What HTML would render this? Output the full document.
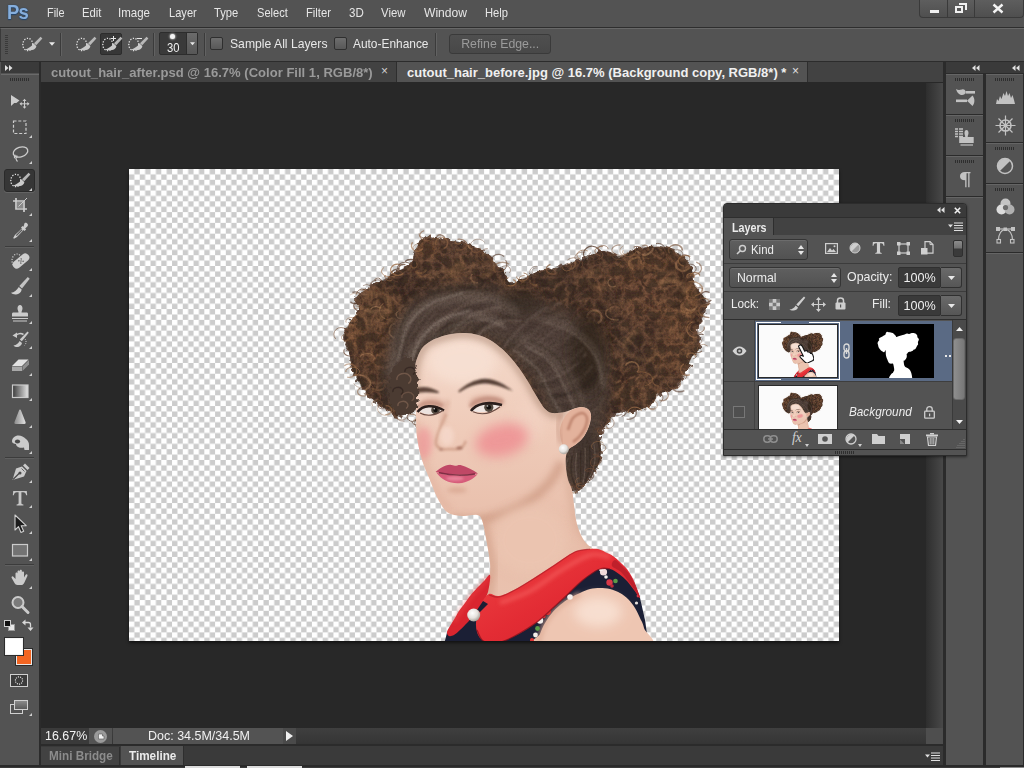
<!DOCTYPE html>
<html>
<head>
<meta charset="utf-8">
<title>Photoshop</title>
<style>
*{box-sizing:border-box;margin:0;padding:0}
html,body{width:1024px;height:768px;overflow:hidden;background:#535353;font-family:"Liberation Sans",sans-serif;color:#e0e0e0}
.abs{position:absolute}
#root{position:relative;width:1024px;height:768px;overflow:hidden;background:#535353}
/* menu bar */
#menubar{left:0;top:0;width:1024px;height:28px;background:#535353;border-bottom:1px solid #2e2e2e}
#menubar span.m{position:absolute;top:5px;font-size:13px;color:#e6e6e6;letter-spacing:0}
#pslogo{left:7px;top:0px;font-size:21px;font-weight:bold;color:#86aedc;letter-spacing:-1px;transform:scaleX(.88);transform-origin:0 0;text-shadow:0 0 1.500px #1d3a5e,0 1px 1px #24466e}
/* options bar */
#optbar{left:0;top:28px;width:1024px;height:33px;background:#535353;border-top:1px solid #686868;border-left:1px solid #3a3a3a}
#optline{left:0;top:61px;width:1024px;height:1px;background:#2c2c2c}
/* doc area */
#docarea{left:41px;top:62px;width:905px;height:685px;background:#282828}
#tabbar{left:41px;top:62px;width:902px;height:20px;background:#424242}
/* toolbar */
#toolhead{left:1px;top:62px;width:38px;height:11px;background:#3a3a3a}
#toolbar{left:1px;top:74px;width:38px;height:694px;background:#535353;border-top:1px solid #6a6a6a}
#toolsep{left:39px;top:62px;width:2px;height:706px;background:#2b2b2b}

/* options bar widgets */
.vsep{position:absolute;width:1px;background:#3b3b3b;box-shadow:1px 0 0 #626262}
.chk{position:absolute;width:13px;height:13px;border:1px solid #2f2f2f;border-radius:2px;background:linear-gradient(#6e6e6e,#585858)}
.otext{position:absolute;font-size:13px;color:#e8e8e8;white-space:nowrap}
#brushpick{left:159px;top:32px;width:39px;height:23px;border:1px solid #2d2d2d;border-radius:2px;background:#3a3a3a}
#brushpick .arr{position:absolute;right:0;top:0;width:11px;height:21px;background:linear-gradient(#6b6b6b,#575757);border-left:1px solid #2d2d2d}
#refine{left:449px;top:34px;width:102px;height:20px;border:1px solid #3a3a3a;border-radius:3px;background:linear-gradient(#4f4f4f,#484848);color:#9b9b9b;font-size:13px;text-align:center;line-height:18px}
.tab{position:absolute;top:0;height:20px;font-size:13px;font-weight:bold;white-space:nowrap;line-height:21px}
/* window controls */
#winctl{left:919px;top:0;width:105px;height:18px;border:1px solid #3a3a3a;border-top:none;border-radius:0 0 4px 4px;background:linear-gradient(#5e5e5e,#4f4f4f)}
/* status */
#status{left:41px;top:728px;width:885px;height:16px;background:linear-gradient(#3f3f3f,#353535)}
#bottomtabs{left:41px;top:746px;width:902px;height:19px;background:#3a3a3a}

.dk{position:absolute;background:#535353;border-top:1px solid #656565}
.grip{position:absolute;height:3px;width:20px;background:repeating-linear-gradient(90deg,#2e2e2e 0 1px,#535353 1px 2px)}

#layers{z-index:20;left:723px;top:203px;width:244px;height:253px;background:#535353;border:1px solid #2c2c2c;border-radius:4px 4px 0 0;overflow:hidden;box-shadow:0 1px 3px rgba(0,0,0,.5)}
#layers .lt{position:absolute;font-size:13px;color:#ececec;white-space:nowrap}
.dd{position:absolute;height:21px;border:1px solid #353535;border-radius:3px;background:linear-gradient(#5f5f5f,#525252);box-shadow:inset 0 1px 0 #6c6c6c;font-size:13px;color:#ececec;line-height:19px}
.fld{position:absolute;height:21px;border:1px solid #303030;border-radius:2px;background:#3a3a3a;font-size:13px;color:#f0f0f0;line-height:19px;text-align:center}
.fldb{position:absolute;height:21px;width:21px;border:1px solid #303030;border-left:none;border-radius:0 3px 3px 0;background:linear-gradient(#6a6a6a,#565656)}

#canvas{left:129px;top:169px;width:710px;height:472px;overflow:hidden;box-shadow:0 2px 3px rgba(0,0,0,.55);background:#fff}
.fx{display:inline-block;transform-origin:0 50%;white-space:nowrap}
</style>
</head>
<body>
<div id="root">
<svg width="0" height="0" style="position:absolute"><defs>
<g id="qsel"><ellipse cx="7.800" cy="10.500" rx="5" ry="6.200" fill="none" stroke="#e2e2e2" stroke-width="1.300" stroke-dasharray="1.300 1.450"/><path d="M20.600 2.800l1.800 1.600-6.200 6.800-2.200-1.900z" fill="#b8b8b8"/><path d="M13.600 9.600l2.700 2.300c0 3.600-5 5.200-11.300 3.800 3.800-1.300 6.800-3.400 8.600-6.100z" fill="#cacaca"/></g>
</defs></svg>

<!--MENUBAR-->
<div id="menubar" class="abs">
<div id="pslogo" class="abs">Ps</div>
<span class="m" style="left:47.0px"><span class="fx" style="transform:scaleX(0.835)">File</span></span>
<span class="m" style="left:82.0px"><span class="fx" style="transform:scaleX(0.870)">Edit</span></span>
<span class="m" style="left:118.2px"><span class="fx" style="transform:scaleX(0.885)">Image</span></span>
<span class="m" style="left:168.8px"><span class="fx" style="transform:scaleX(0.853)">Layer</span></span>
<span class="m" style="left:214.0px"><span class="fx" style="transform:scaleX(0.860)">Type</span></span>
<span class="m" style="left:256.8px"><span class="fx" style="transform:scaleX(0.851)">Select</span></span>
<span class="m" style="left:306.2px"><span class="fx" style="transform:scaleX(0.865)">Filter</span></span>
<span class="m" style="left:348.8px"><span class="fx" style="transform:scaleX(0.887)">3D</span></span>
<span class="m" style="left:380.5px"><span class="fx" style="transform:scaleX(0.876)">View</span></span>
<span class="m" style="left:423.8px"><span class="fx" style="transform:scaleX(0.930)">Window</span></span>
<span class="m" style="left:485.0px"><span class="fx" style="transform:scaleX(0.860)">Help</span></span>
</div>
<!--OPTBAR-->
<div id="optbar" class="abs"></div>
<div id="optline" class="abs"></div>
<!-- grip -->
<div class="abs" style="left:5px;top:35px;width:3px;height:20px;background:repeating-linear-gradient(#3a3a3a 0 1px,#535353 1px 2px)"></div>
<svg class="abs" style="left:20px;top:34px" width="24" height="20" viewBox="0 0 24 20"><use href="#qsel"/></svg>
<svg class="abs" style="left:49px;top:42px" width="6" height="4" viewBox="0 0 7 4"><path d="M0 0h7L3.5 4z" fill="#e8e8e8"/></svg>
<div class="vsep" style="left:60px;top:33px;height:23px"></div>
<svg class="abs" style="left:74px;top:34px" width="24" height="20" viewBox="0 0 24 20"><use href="#qsel"/></svg>
<div class="abs" style="left:100px;top:33px;width:22px;height:22px;background:#373737;border:1px solid #2c2c2c;border-radius:2px"></div>
<svg class="abs" style="left:100px;top:34px" width="24" height="20" viewBox="0 0 24 20"><use href="#qsel"/><path d="M13.5 2v5M11 4.500h5" stroke="#e8e8e8" stroke-width="1" fill="none"/></svg>
<svg class="abs" style="left:126px;top:34px" width="24" height="20" viewBox="0 0 24 20"><use href="#qsel"/><path d="M11 4.500h5" stroke="#e8e8e8" stroke-width="1" fill="none"/></svg>
<div class="vsep" style="left:153px;top:33px;height:23px"></div>
<div id="brushpick" class="abs"><div class="arr"></div>
<div class="abs" style="left:10px;top:1px;width:5px;height:5px;border-radius:50%;background:#f4f4f4;box-shadow:0 0 2px 0.500px rgba(255,255,255,.7)"></div>
<div class="abs" style="left:0;top:7px;width:26px;text-align:center;font-size:13px;color:#f0f0f0"><span class="fx" style="transform-origin:50% 50%;transform:scaleX(0.864)">30</span></div>
<svg class="abs" style="left:30px;top:9px" width="5" height="3.500" viewBox="0 0 7 4"><path d="M0 0h7L3.5 4z" fill="#e8e8e8"/></svg>
</div>
<div class="vsep" style="left:204px;top:33px;height:23px"></div>
<div class="chk" style="left:210px;top:37px"></div>
<div class="otext" style="left:230px;top:36px"><span class="fx" style="transform:scaleX(0.937)">Sample All Layers</span></div>
<div class="chk" style="left:334px;top:37px"></div>
<div class="otext" style="left:353px;top:36px"><span class="fx" style="transform:scaleX(0.916)">Auto-Enhance</span></div>
<div class="vsep" style="left:435px;top:33px;height:23px"></div>
<div id="refine" class="abs"><span class="fx" style="transform-origin:50% 50%;transform:scaleX(0.947)">Refine Edge...</span></div>
<div id="winctl" class="abs">
<div class="abs" style="left:27px;top:0;width:1px;height:17px;background:#3a3a3a"></div>
<div class="abs" style="left:54px;top:0;width:1px;height:17px;background:#3a3a3a"></div>
<div class="abs" style="left:10px;top:10px;width:9px;height:3px;background:#f0f0f0"></div>
<div class="abs" style="left:35px;top:6px;width:8px;height:7px;border:2px solid #f0f0f0"></div>
<div class="abs" style="left:39px;top:3px;width:8px;height:7px;border:2px solid #f0f0f0;border-left-width:0;border-bottom-width:0"></div>
<svg class="abs" style="left:72px;top:3px" width="12" height="11" viewBox="0 0 12 11"><path d="M1.500 1.500L10.500 9.500M10.500 1.500L1.500 9.500" stroke="#f4f4f4" stroke-width="2.400"/></svg>
</div>
<!--DOCAREA-->
<div id="docarea" class="abs"></div>
<div id="tabbar" class="abs">
<div class="tab" style="left:0;width:355px;background:#424242;color:#9a9a9a;padding-left:10px"><span class="fx" style="transform:scaleX(1.004)">cutout_hair_after.psd @ 16.7% (Color Fill 1, RGB/8*)</span><span style="position:absolute;left:340px;top:-1px;font-size:12px;color:#cfcfcf;font-weight:normal">×</span></div>
<div class="tab" style="left:355px;width:412px;background:#535353;color:#f0f0f0;padding-left:10px;border-left:1px solid #2e2e2e;border-right:1px solid #2e2e2e"><span class="fx" style="transform:scaleX(1.000)">cutout_hair_before.jpg @ 16.7% (Background copy, RGB/8*) *</span><span style="position:absolute;left:395px;top:-1px;font-size:12px;color:#e0e0e0;font-weight:normal">×</span></div>
</div>
<!--TOOLBAR-->
<div id="toolhead" class="abs"></div>
<svg class="abs" style="left:5px;top:65px" width="8" height="6" viewBox="0 0 8 6"><path d="M0 0l3.500 3-3.500 3zM4 0l3.500 3-3.500 3z" fill="#e0e0e0"/></svg>
<div id="toolbar" class="abs"></div>
<div class="abs" style="left:10px;top:78px;width:20px;height:3px;background:repeating-linear-gradient(90deg,#2f2f2f 0 1px,#535353 1px 2px)"></div>
<div class="abs" style="left:4px;top:169px;width:31px;height:23px;background:#363636;border:1px solid #2a2a2a;border-radius:3px;box-shadow:0 1px 0 #646464"></div>
<svg class="abs" style="left:7.500px;top:89px" width="24" height="24" viewBox="0 0 24 24"><path d="M3 6v11l3.200-3 2.200 .1 3.100-2.500z" fill="#cdcdcd"/><path d="M16.500 11v7.500M12.700 14.800h7.600" stroke="#cdcdcd" stroke-width="1" fill="none"/><path d="M16.500 9.800l-1.900 2.200h3.800zM16.500 19.800l-1.900-2.200h3.800zM11.500 14.800l2.200-1.900v3.800zM21.500 14.800l-2.200-1.900v3.800z" fill="#cdcdcd"/></svg>
<svg class="abs" style="left:7.500px;top:115px" width="24" height="24" viewBox="0 0 24 24"><rect x="5.500" y="6" width="12.500" height="12.500" fill="none" stroke="#cdcdcd" stroke-width="1.200" stroke-dasharray="3 1.800"/></svg>
<svg class="abs" style="left:7.500px;top:141.5px" width="24" height="24" viewBox="0 0 24 24"><ellipse cx="12.500" cy="10" rx="7.500" ry="4.800" transform="rotate(-18 12.500 10)" fill="none" stroke="#cdcdcd" stroke-width="1.300"/><path d="M7.500 13c-1.500 1-1.500 3 0 3s2-1.500 1-2.500M8 16c0 1.500 .5 2.500 1.500 3.500" fill="none" stroke="#cbcbcb" stroke-width="1.200"/></svg>
<svg class="abs" style="left:7.500px;top:193px" width="24" height="24" viewBox="0 0 24 24"><path d="M8 5v11h11M5 8h11v11" fill="none" stroke="#cdcdcd" stroke-width="1.700"/><rect x="9" y="9" width="6" height="6" fill="#8a8a8a"/><path d="M19 5l-8.500 8.500" stroke="#cdcdcd" stroke-width="1" fill="none"/></svg>
<svg class="abs" style="left:7.500px;top:219px" width="24" height="24" viewBox="0 0 24 24"><path d="M16.500 4.200c1.600-1.600 4.600 1.300 3 3l-2.300 2.300 .9 .9-1.600 1.600-.9-.9-6.600 7-3 1.700-.8-.8 1.700-3 7-6.600-.9-.9 1.600-1.600 .9 .9z" fill="#cdcdcd"/><path d="M8.300 16.600l5.800-5.800" stroke="#5a5a5a" stroke-width="1.300"/></svg>
<svg class="abs" style="left:7.500px;top:248.5px" width="24" height="24" viewBox="0 0 24 24"><ellipse cx="9" cy="11.500" rx="5" ry="6.500" fill="none" stroke="#cbcbcb" stroke-width="1.200" stroke-dasharray="1.200 1.400"/><g transform="rotate(-40 13 12)"><rect x="3.500" y="8" width="19" height="8" rx="3.800" fill="#cdcdcd"/><circle cx="11.500" cy="10.500" r=".7" fill="#555"/><circle cx="14.500" cy="10.500" r=".7" fill="#555"/><circle cx="11.500" cy="13.500" r=".7" fill="#555"/><circle cx="14.500" cy="13.500" r=".7" fill="#555"/><circle cx="13" cy="12" r=".7" fill="#555"/></g></svg>
<svg class="abs" style="left:7.500px;top:274px" width="24" height="24" viewBox="0 0 24 24"><path d="M19.800 3l1.900 1.700-7.700 9.800-2.700-2.400z" fill="#c4c4c4"/><path d="M3 18.800c3.300-.4 5.600-2.400 7.800-5.800l2.900 2.500c-.4 3.200-2.800 4.700-5.600 4.900-2.200 .1-4-.4-5.100-1.600z" fill="#d0d0d0"/></svg>
<svg class="abs" style="left:7.500px;top:301px" width="24" height="24" viewBox="0 0 24 24"><path d="M9.500 7.500c0-2 1-3.500 2.500-3.500s2.500 1.500 2.500 3.500c0 1.500-1 2.500-1 4h5c1 0 1.500 .5 1.500 1.500v2.500h-16v-2.500c0-1 .5-1.500 1.500-1.500h5c0-1.500-1-2.500-1-4z" fill="#cbcbcb"/><path d="M4 17.500h16M5 20h14" stroke="#cbcbcb" stroke-width="1.200"/></svg>
<svg class="abs" style="left:7.500px;top:326.5px" width="24" height="24" viewBox="0 0 24 24"><path d="M19.500 4.500l1.300 1.200-7 8.500-2-1.800z" fill="#cbcbcb"/><path d="M5.500 18.500c3-.2 4.500-2 6.200-4.500l2.300 2.100c-.5 2.500-2.500 3.800-4.500 4-1.700 .1-3-.5-4-1.600z" fill="#cbcbcb"/><path d="M7.500 8.500c2-2 5.500-2.500 8-1" fill="none" stroke="#cbcbcb" stroke-width="1.600"/><path d="M4.500 8.500l4.500-3v5.500z" fill="#cbcbcb"/><path d="M17 12c1.500 1.500 1.500 4.500-.5 6.500" fill="none" stroke="#cbcbcb" stroke-width="1" stroke-dasharray="1 1.200"/></svg>
<svg class="abs" style="left:7.500px;top:353px" width="24" height="24" viewBox="0 0 24 24"><path d="M10.500 6.500h10l-6.500 6.500h-10z" fill="#e2e2e2"/><path d="M4 13.500h10v4.500h-10z" fill="#a8a8a8"/><path d="M14.500 13.500l6.500-6.500v4.500l-6.500 6.500z" fill="#8e8e8e"/></svg>
<svg class="abs" style="left:7.500px;top:378.5px" width="24" height="24" viewBox="0 0 24 24"><defs><linearGradient id="gg" x1="0" x2="1"><stop offset="0" stop-color="#3a3a3a"/><stop offset="1" stop-color="#e4e4e4"/></linearGradient></defs><rect x="4.500" y="6" width="15.500" height="12.500" fill="url(#gg)" stroke="#cbcbcb" stroke-width="1.200"/></svg>
<svg class="abs" style="left:7.500px;top:405px" width="24" height="24" viewBox="0 0 24 24"><defs><linearGradient id="bg2" x1="0" x2="1"><stop offset="0" stop-color="#8c8c8c"/><stop offset="1" stop-color="#e2e2e2"/></linearGradient></defs><path d="M12 4.500c.5 0 .8 .3 1 1l4.500 11.500c.4 1.200 0 2-1.200 2h-8.600c-1.200 0-1.600-.8-1.200-2l4.500-11.500c.2-.7 .5-1 1-1z" fill="url(#bg2)"/></svg>
<svg class="abs" style="left:7.500px;top:431px" width="24" height="24" viewBox="0 0 24 24"><path d="M4 10.500c0-3.500 3-6 6.500-6 3 0 5 1.500 7.500 3.500 2 1.500 3 3.500 3 6v5h-4.500l-.5-2.500c-2 .5-4 .5-6-.5-1.500-.8-2-2-2-3-2-.2-4-.8-4-2.500z" fill="#cbcbcb"/><ellipse cx="9.500" cy="10.500" rx="2.600" ry="1.900" fill="#4a4a4a"/></svg>
<svg class="abs" style="left:7.500px;top:460px" width="24" height="24" viewBox="0 0 24 24"><path d="M17 3.500l4.500 4.500-2 2-4.500-4.500z" fill="#cbcbcb"/><path d="M14 6.500l4.500 4.500-2.500 5.500-11.500 3.500 3.500-11.500z" fill="#cbcbcb"/><path d="M5 19.500l6.500-6.500" stroke="#4a4a4a" stroke-width="1.200"/><circle cx="12" cy="13" r="1.500" fill="#4a4a4a"/><path d="M13.500 8.500l3 3" stroke="#4a4a4a" stroke-width=".8"/></svg>
<svg class="abs" style="left:7.500px;top:485.5px" width="24" height="24" viewBox="0 0 24 24"><path d="M5.200 5h13.600l.4 4.300h-1c-.4-2.200-1.300-3.100-3-3.100h-1.800v10.600c0 1.300 .4 1.600 2 1.700v.9h-6.800v-.9c1.600-.1 2-.4 2-1.700v-10.600h-1.800c-1.700 0-2.600 .9-3 3.100h-1z" fill="#c6c6c6"/></svg>
<svg class="abs" style="left:7.500px;top:511.5px" width="24" height="24" viewBox="0 0 24 24"><path d="M7 3v15l3.500-3.300 2.500 5.800 2.700-1.200-2.500-5.600h5z" fill="#1c1c1c" stroke="#cfcfcf" stroke-width="1.100" stroke-linejoin="round"/></svg>
<svg class="abs" style="left:7.500px;top:538px" width="24" height="24" viewBox="0 0 24 24"><rect x="4.500" y="6.500" width="15" height="11.500" fill="#737373" stroke="#cbcbcb" stroke-width="1.200"/></svg>
<svg class="abs" style="left:7.500px;top:566.5px" width="24" height="24" viewBox="0 0 24 24"><path d="M7.500 12v-5.500c0-1.500 2-1.500 2 0v-2c0-1.500 2.200-1.500 2.200 0v-.7c0-1.500 2.200-1.500 2.200 0v1.700c0-1.400 2.100-1.400 2.100 0v5l1.500-2.500c.8-1.300 2.500-.4 1.900 .9l-3 6.500c-.7 1.500-1.500 2.600-3.400 2.600h-3.500c-1.500 0-2.300-.7-3-2l-2.800-5c-.7-1.300 1-2.300 1.900-1.100z" fill="#cbcbcb"/></svg>
<svg class="abs" style="left:7.500px;top:592.5px" width="24" height="24" viewBox="0 0 24 24"><circle cx="10" cy="9.500" r="5.500" fill="#7b7b7b" stroke="#cbcbcb" stroke-width="2"/><path d="M14 13.500l6 6" stroke="#cbcbcb" stroke-width="3" stroke-linecap="round"/></svg>
<svg class="abs" style="left:8px;top:170px" width="24" height="20" viewBox="0 0 24 20"><use href="#qsel"/></svg>
<svg class="abs" style="left:29px;top:134.5px" width="3" height="3" viewBox="0 0 3 3"><path d="M3 0v3h-3z" fill="#d0d0d0"/></svg>
<svg class="abs" style="left:29px;top:161.0px" width="3" height="3" viewBox="0 0 3 3"><path d="M3 0v3h-3z" fill="#d0d0d0"/></svg>
<svg class="abs" style="left:29px;top:212.5px" width="3" height="3" viewBox="0 0 3 3"><path d="M3 0v3h-3z" fill="#d0d0d0"/></svg>
<svg class="abs" style="left:29px;top:238.5px" width="3" height="3" viewBox="0 0 3 3"><path d="M3 0v3h-3z" fill="#d0d0d0"/></svg>
<svg class="abs" style="left:29px;top:268.0px" width="3" height="3" viewBox="0 0 3 3"><path d="M3 0v3h-3z" fill="#d0d0d0"/></svg>
<svg class="abs" style="left:29px;top:293.5px" width="3" height="3" viewBox="0 0 3 3"><path d="M3 0v3h-3z" fill="#d0d0d0"/></svg>
<svg class="abs" style="left:29px;top:320.5px" width="3" height="3" viewBox="0 0 3 3"><path d="M3 0v3h-3z" fill="#d0d0d0"/></svg>
<svg class="abs" style="left:29px;top:346.0px" width="3" height="3" viewBox="0 0 3 3"><path d="M3 0v3h-3z" fill="#d0d0d0"/></svg>
<svg class="abs" style="left:29px;top:372.5px" width="3" height="3" viewBox="0 0 3 3"><path d="M3 0v3h-3z" fill="#d0d0d0"/></svg>
<svg class="abs" style="left:29px;top:398.0px" width="3" height="3" viewBox="0 0 3 3"><path d="M3 0v3h-3z" fill="#d0d0d0"/></svg>
<svg class="abs" style="left:29px;top:424.5px" width="3" height="3" viewBox="0 0 3 3"><path d="M3 0v3h-3z" fill="#d0d0d0"/></svg>
<svg class="abs" style="left:29px;top:450.5px" width="3" height="3" viewBox="0 0 3 3"><path d="M3 0v3h-3z" fill="#d0d0d0"/></svg>
<svg class="abs" style="left:29px;top:479.5px" width="3" height="3" viewBox="0 0 3 3"><path d="M3 0v3h-3z" fill="#d0d0d0"/></svg>
<svg class="abs" style="left:29px;top:505.0px" width="3" height="3" viewBox="0 0 3 3"><path d="M3 0v3h-3z" fill="#d0d0d0"/></svg>
<svg class="abs" style="left:29px;top:531.0px" width="3" height="3" viewBox="0 0 3 3"><path d="M3 0v3h-3z" fill="#d0d0d0"/></svg>
<svg class="abs" style="left:29px;top:557.5px" width="3" height="3" viewBox="0 0 3 3"><path d="M3 0v3h-3z" fill="#d0d0d0"/></svg>
<svg class="abs" style="left:29px;top:586.0px" width="3" height="3" viewBox="0 0 3 3"><path d="M3 0v3h-3z" fill="#d0d0d0"/></svg>
<svg class="abs" style="left:29px;top:187.500px" width="3" height="3" viewBox="0 0 3 3"><path d="M3 0v3h-3z" fill="#d0d0d0"/></svg>
<div class="abs" style="left:5px;top:246px;width:29px;height:1px;background:#3c3c3c;box-shadow:0 1px 0 #606060"></div>
<div class="abs" style="left:5px;top:457px;width:29px;height:1px;background:#3c3c3c;box-shadow:0 1px 0 #606060"></div>
<div class="abs" style="left:5px;top:564px;width:29px;height:1px;background:#3c3c3c;box-shadow:0 1px 0 #606060"></div>
<div class="abs" style="left:8px;top:624px;width:7px;height:7px;background:#e8e8e8;border:1px solid #999"></div>
<div class="abs" style="left:4px;top:620px;width:7px;height:7px;background:#111;border:1px solid #cfcfcf"></div>
<svg class="abs" style="left:22px;top:619px" width="12" height="12" viewBox="0 0 12 12"><path d="M2.500 3.500h4c1.500 0 2 .5 2 2v3" fill="none" stroke="#d8d8d8" stroke-width="1.300"/><path d="M0 3.500l3.500-3v6zM8.500 12l-3-3.500h6z" fill="#d8d8d8"/></svg>
<div class="abs" style="left:16px;top:649px;width:16px;height:16px;background:#f26522;border:1px solid #e8e8e8;box-shadow:0 0 0 1px #2c2c2c"></div>
<div class="abs" style="left:5px;top:638px;width:18px;height:17px;background:#fff;border:1px solid #f4f4f4;box-shadow:0 0 0 1px #2c2c2c"></div>
<div class="abs" style="left:10px;top:674px;width:18px;height:13px;background:#3c3c3c;border:1px solid #d0d0d0"></div>
<svg class="abs" style="left:10px;top:674px" width="18" height="13" viewBox="0 0 18 13"><circle cx="9" cy="6.500" r="3.600" fill="none" stroke="#f0f0f0" stroke-width="1.100" stroke-dasharray="1.100 1.100"/></svg>
<div class="abs" style="left:10px;top:704px;width:13px;height:10px;background:#535353;border:1px solid #d0d0d0"></div>
<div class="abs" style="left:14px;top:700px;width:14px;height:10px;background:linear-gradient(#8a8a8a,#5a5a5a);border:1px solid #d0d0d0"></div>
<svg class="abs" style="left:29px;top:713px" width="3" height="3" viewBox="0 0 3 3"><path d="M3 0v3h-3z" fill="#d0d0d0"/></svg>
<div id="toolsep" class="abs"></div>
<!--CANVAS-->
<div id="canvas" class="abs">
<svg class="abs" style="left:0;top:0" width="710" height="472" viewBox="0 0 710 472"><defs><pattern id="chk" width="10.760" height="10.776" patternUnits="userSpaceOnUse"><rect width="10.760" height="10.776" fill="#fff"/><rect x="5.380" y="0" width="5.380" height="5.388" fill="#cccccc"/><rect x="0" y="5.388" width="5.380" height="5.388" fill="#cccccc"/></pattern></defs><rect width="710" height="472" fill="url(#chk)"/></svg>
<!--PORTRAIT_START-->
<svg class="abs" style="left:0;top:0" width="710" height="472" viewBox="129 169 710 472">
<defs>
<filter id="frizz" x="-10%" y="-10%" width="120%" height="120%"><feTurbulence type="fractalNoise" baseFrequency="0.11" numOctaves="2" seed="4" result="n"/><feDisplacementMap in="SourceGraphic" in2="n" scale="12" xChannelSelector="R" yChannelSelector="G"/></filter>
<filter id="frizz2" x="-10%" y="-10%" width="120%" height="120%"><feTurbulence type="fractalNoise" baseFrequency="0.22" numOctaves="2" seed="9" result="n"/><feDisplacementMap in="SourceGraphic" in2="n" scale="9" xChannelSelector="R" yChannelSelector="G"/></filter>
<filter id="b1" x="-60%" y="-60%" width="220%" height="220%"><feGaussianBlur stdDeviation="1"/></filter>
<filter id="b07" x="-60%" y="-60%" width="220%" height="220%"><feGaussianBlur stdDeviation=".7"/></filter>
<filter id="b15" x="-60%" y="-60%" width="220%" height="220%"><feGaussianBlur stdDeviation="1.500"/></filter>
<filter id="b2" x="-60%" y="-60%" width="220%" height="220%"><feGaussianBlur stdDeviation="2"/></filter>
<filter id="b3" x="-60%" y="-60%" width="220%" height="220%"><feGaussianBlur stdDeviation="3.500"/></filter>
<filter id="b6" x="-60%" y="-60%" width="220%" height="220%"><feGaussianBlur stdDeviation="6"/></filter>
<filter id="b10" x="-60%" y="-60%" width="220%" height="220%"><feGaussianBlur stdDeviation="10"/></filter>
<filter id="curlL" x="0" y="0" width="100%" height="100%"><feTurbulence type="turbulence" baseFrequency="0.075" numOctaves="3" seed="5" result="n"/><feColorMatrix in="n" type="matrix" values="0 0 0 0 0  0 0 0 0 0  0 0 0 0 0  3.200 0 0 0 -.42" result="a"/><feComposite in="SourceGraphic" in2="a" operator="in"/></filter>
<filter id="curlD" x="0" y="0" width="100%" height="100%"><feTurbulence type="turbulence" baseFrequency="0.09" numOctaves="3" seed="11" result="n"/><feColorMatrix in="n" type="matrix" values="0 0 0 0 0  0 0 0 0 0  0 0 0 0 0  0 3.400 0 0 -.40" result="a"/><feComposite in="SourceGraphic" in2="a" operator="in"/></filter>
<filter id="fine" x="0" y="0" width="100%" height="100%"><feTurbulence type="fractalNoise" baseFrequency="0.45" numOctaves="2" seed="3" result="n"/><feColorMatrix in="n" type="matrix" values="0 0 0 0 0  0 0 0 0 0  0 0 0 0 0  2.500 0 0 0 -.95" result="a"/><feComposite in="SourceGraphic" in2="a" operator="in"/></filter>
<clipPath id="hairclip"><path d="M402.0 416.0C396.7 418.5 393.0 413.0 388.0 410.0C383.0 407.0 376.7 402.3 372.0 398.0C367.3 393.7 363.3 389.0 360.0 384.0C356.7 379.0 353.8 373.3 352.0 368.0C350.2 362.7 350.3 357.2 349.0 352.0C347.7 346.8 343.8 342.0 344.0 337.0C344.2 332.0 347.3 326.7 350.0 322.0C352.7 317.3 359.2 312.7 360.0 309.0C360.8 305.3 354.7 302.8 355.0 300.0C355.3 297.2 358.2 294.8 362.0 292.0C365.8 289.2 372.3 286.3 378.0 283.0C383.7 279.7 390.3 275.3 396.0 272.0C401.7 268.7 408.5 267.2 412.0 263.0C415.5 258.8 414.5 251.3 417.0 247.0C419.5 242.7 422.7 238.0 427.0 237.0C431.3 236.0 437.5 240.0 443.0 241.0C448.5 242.0 454.3 241.8 460.0 243.0C465.7 244.2 472.0 245.5 477.0 248.0C482.0 250.5 485.7 254.2 490.0 258.0C494.3 261.8 499.7 266.8 503.0 271.0C506.3 275.2 506.8 281.7 510.0 283.0C513.2 284.3 518.0 280.7 522.0 279.0C526.0 277.3 529.3 274.5 534.0 273.0C538.7 271.5 544.8 271.3 550.0 270.0C555.2 268.7 559.0 267.0 565.0 265.0C571.0 263.0 579.7 260.3 586.0 258.0C592.3 255.7 597.3 251.3 603.0 251.0C608.7 250.7 614.3 256.3 620.0 256.0C625.7 255.7 630.5 250.5 637.0 249.0C643.5 247.5 652.5 246.5 659.0 247.0C665.5 247.5 670.7 248.7 676.0 252.0C681.3 255.3 688.0 261.5 691.0 267.0C694.0 272.5 691.5 279.5 694.0 285.0C696.5 290.5 704.3 295.3 706.0 300.0C707.7 304.7 705.3 308.3 704.0 313.0C702.7 317.7 698.7 322.3 698.0 328.0C697.3 333.7 701.0 342.2 700.0 347.0C699.0 351.8 694.2 353.5 692.0 357.0C689.8 360.5 689.7 363.0 687.0 368.0C684.3 373.0 680.5 382.7 676.0 387.0C671.5 391.3 664.3 390.8 660.0 394.0C655.7 397.2 654.5 403.2 650.0 406.0C645.5 408.8 638.7 409.8 633.0 411.0C627.3 412.2 620.3 410.8 616.0 413.0C611.7 415.2 609.8 420.8 607.0 424.0C604.2 427.2 600.0 428.2 599.0 432.0C598.0 435.8 601.0 442.0 601.0 447.0C601.0 452.0 600.5 457.3 599.0 462.0C597.5 466.7 594.8 471.0 592.0 475.0C589.2 479.0 585.3 483.3 582.0 486.0C578.7 488.7 576.5 493.7 572.0 491.0C567.5 488.3 562.0 478.5 555.0 470.0C548.0 461.5 539.2 451.7 530.0 440.0C520.8 428.3 513.3 408.3 500.0 400.0C486.7 391.7 463.3 390.8 450.0 390.0C436.7 389.2 428.0 390.7 420.0 395.0C412.0 399.3 407.3 413.5 402.0 416.0Z"/></clipPath>
<clipPath id="skinclip"><path d="M415.0 368.0C415.5 362.0 416.7 359.5 418.0 356.0C419.3 352.5 420.8 349.5 423.0 347.0C425.2 344.5 428.2 342.7 431.0 341.0C433.8 339.3 436.5 338.2 440.0 337.0C443.5 335.8 447.8 334.7 452.0 334.0C456.2 333.3 460.7 332.8 465.0 333.0C469.3 333.2 473.8 333.8 478.0 335.0C482.2 336.2 486.2 337.8 490.0 340.0C493.8 342.2 497.7 345.2 501.0 348.0C504.3 350.8 507.0 353.7 510.0 357.0C513.0 360.3 516.2 364.2 519.0 368.0C521.8 371.8 524.5 376.0 527.0 380.0C529.5 384.0 531.8 388.3 534.0 392.0C536.2 395.7 538.2 399.2 540.0 402.0C541.8 404.8 543.0 407.2 545.0 409.0C547.0 410.8 548.7 412.5 552.0 413.0C555.3 413.5 561.5 412.7 565.0 412.0C568.5 411.3 570.3 409.8 573.0 409.0C575.7 408.2 578.5 407.0 581.0 407.0C583.5 407.0 586.3 407.7 588.0 409.0C589.7 410.3 590.7 412.7 591.0 415.0C591.3 417.3 590.7 420.3 590.0 423.0C589.3 425.7 588.3 428.3 587.0 431.0C585.7 433.7 584.0 436.7 582.0 439.0C580.0 441.3 577.2 443.3 575.0 445.0C572.8 446.7 570.5 447.2 569.0 449.0C567.5 450.8 566.5 452.8 566.0 456.0C565.5 459.2 565.7 464.0 566.0 468.0C566.3 472.0 567.0 476.3 568.0 480.0C569.0 483.7 571.0 485.8 572.0 490.0C573.0 494.2 573.3 500.0 574.0 505.0C574.7 510.0 575.0 515.3 576.0 520.0C577.0 524.7 578.3 529.2 580.0 533.0C581.7 536.8 583.3 540.0 586.0 543.0C588.7 546.0 592.7 548.8 596.0 551.0C599.3 553.2 604.3 545.8 606.0 556.0C607.7 566.2 626.7 602.7 606.0 612.0C585.3 621.3 502.5 614.7 482.0 612.0C461.5 609.3 481.8 601.7 483.0 596.0C484.2 590.3 487.8 583.5 489.0 578.0C490.2 572.5 490.5 569.7 490.0 563.0C489.5 556.3 487.3 545.2 486.0 538.0C484.7 530.8 483.5 523.8 482.0 520.0C480.5 516.2 480.3 515.7 477.0 515.0C473.7 514.3 467.0 516.5 462.0 516.0C457.0 515.5 451.2 515.2 447.0 512.0C442.8 508.8 439.8 502.3 437.0 497.0C434.2 491.7 432.5 486.2 430.0 480.0C427.5 473.8 424.2 467.2 422.0 460.0C419.8 452.8 418.0 444.2 417.0 437.0C416.0 429.8 416.3 424.5 416.0 417.0C415.7 409.5 415.2 400.2 415.0 392.0C414.8 383.8 414.5 374.0 415.0 368.0Z"/></clipPath>
<clipPath id="cvs"><rect x="129" y="169" width="710" height="472"/></clipPath>
<linearGradient id="collg" x1="0" y1="0" x2="1" y2="1"><stop offset="0" stop-color="#ee4444"/><stop offset=".5" stop-color="#e32c34"/><stop offset="1" stop-color="#cf222c"/></linearGradient>
<radialGradient id="pearl" cx=".4" cy=".35" r=".7"><stop offset="0" stop-color="#ffffff"/><stop offset=".55" stop-color="#e6e2de"/><stop offset="1" stop-color="#9c968e"/></radialGradient>
<linearGradient id="skg" x1="0" y1="0" x2="0" y2="1"><stop offset="0" stop-color="#f4dacb"/><stop offset=".35" stop-color="#efcbb9"/><stop offset=".7" stop-color="#e8beaa"/><stop offset="1" stop-color="#eac3b0"/></linearGradient>
</defs>
<g id="pg">
<g filter="url(#frizz)"><path d="M402.0 416.0C396.7 418.5 393.0 413.0 388.0 410.0C383.0 407.0 376.7 402.3 372.0 398.0C367.3 393.7 363.3 389.0 360.0 384.0C356.7 379.0 353.8 373.3 352.0 368.0C350.2 362.7 350.3 357.2 349.0 352.0C347.7 346.8 343.8 342.0 344.0 337.0C344.2 332.0 347.3 326.7 350.0 322.0C352.7 317.3 359.2 312.7 360.0 309.0C360.8 305.3 354.7 302.8 355.0 300.0C355.3 297.2 358.2 294.8 362.0 292.0C365.8 289.2 372.3 286.3 378.0 283.0C383.7 279.7 390.3 275.3 396.0 272.0C401.7 268.7 408.5 267.2 412.0 263.0C415.5 258.8 414.5 251.3 417.0 247.0C419.5 242.7 422.7 238.0 427.0 237.0C431.3 236.0 437.5 240.0 443.0 241.0C448.5 242.0 454.3 241.8 460.0 243.0C465.7 244.2 472.0 245.5 477.0 248.0C482.0 250.5 485.7 254.2 490.0 258.0C494.3 261.8 499.7 266.8 503.0 271.0C506.3 275.2 506.8 281.7 510.0 283.0C513.2 284.3 518.0 280.7 522.0 279.0C526.0 277.3 529.3 274.5 534.0 273.0C538.7 271.5 544.8 271.3 550.0 270.0C555.2 268.7 559.0 267.0 565.0 265.0C571.0 263.0 579.7 260.3 586.0 258.0C592.3 255.7 597.3 251.3 603.0 251.0C608.7 250.7 614.3 256.3 620.0 256.0C625.7 255.7 630.5 250.5 637.0 249.0C643.5 247.5 652.5 246.5 659.0 247.0C665.5 247.5 670.7 248.7 676.0 252.0C681.3 255.3 688.0 261.5 691.0 267.0C694.0 272.5 691.5 279.5 694.0 285.0C696.5 290.5 704.3 295.3 706.0 300.0C707.7 304.7 705.3 308.3 704.0 313.0C702.7 317.7 698.7 322.3 698.0 328.0C697.3 333.7 701.0 342.2 700.0 347.0C699.0 351.8 694.2 353.5 692.0 357.0C689.8 360.5 689.7 363.0 687.0 368.0C684.3 373.0 680.5 382.7 676.0 387.0C671.5 391.3 664.3 390.8 660.0 394.0C655.7 397.2 654.5 403.2 650.0 406.0C645.5 408.8 638.7 409.8 633.0 411.0C627.3 412.2 620.3 410.8 616.0 413.0C611.7 415.2 609.8 420.8 607.0 424.0C604.2 427.2 600.0 428.2 599.0 432.0C598.0 435.8 601.0 442.0 601.0 447.0C601.0 452.0 600.5 457.3 599.0 462.0C597.5 466.7 594.8 471.0 592.0 475.0C589.2 479.0 585.3 483.3 582.0 486.0C578.7 488.7 576.5 493.7 572.0 491.0C567.5 488.3 562.0 478.5 555.0 470.0C548.0 461.5 539.2 451.7 530.0 440.0C520.8 428.3 513.3 408.3 500.0 400.0C486.7 391.7 463.3 390.8 450.0 390.0C436.7 389.2 428.0 390.7 420.0 395.0C412.0 399.3 407.3 413.5 402.0 416.0Z" fill="#624637"/></g>
<g filter="url(#frizz2)" opacity=".85"><path d="M402.0 416.0C396.7 418.5 393.0 413.0 388.0 410.0C383.0 407.0 376.7 402.3 372.0 398.0C367.3 393.7 363.3 389.0 360.0 384.0C356.7 379.0 353.8 373.3 352.0 368.0C350.2 362.7 350.3 357.2 349.0 352.0C347.7 346.8 343.8 342.0 344.0 337.0C344.2 332.0 347.3 326.7 350.0 322.0C352.7 317.3 359.2 312.7 360.0 309.0C360.8 305.3 354.7 302.8 355.0 300.0C355.3 297.2 358.2 294.8 362.0 292.0C365.8 289.2 372.3 286.3 378.0 283.0C383.7 279.7 390.3 275.3 396.0 272.0C401.7 268.7 408.5 267.2 412.0 263.0C415.5 258.8 414.5 251.3 417.0 247.0C419.5 242.7 422.7 238.0 427.0 237.0C431.3 236.0 437.5 240.0 443.0 241.0C448.5 242.0 454.3 241.8 460.0 243.0C465.7 244.2 472.0 245.5 477.0 248.0C482.0 250.5 485.7 254.2 490.0 258.0C494.3 261.8 499.7 266.8 503.0 271.0C506.3 275.2 506.8 281.7 510.0 283.0C513.2 284.3 518.0 280.7 522.0 279.0C526.0 277.3 529.3 274.5 534.0 273.0C538.7 271.5 544.8 271.3 550.0 270.0C555.2 268.7 559.0 267.0 565.0 265.0C571.0 263.0 579.7 260.3 586.0 258.0C592.3 255.7 597.3 251.3 603.0 251.0C608.7 250.7 614.3 256.3 620.0 256.0C625.7 255.7 630.5 250.5 637.0 249.0C643.5 247.5 652.5 246.5 659.0 247.0C665.5 247.5 670.7 248.7 676.0 252.0C681.3 255.3 688.0 261.5 691.0 267.0C694.0 272.5 691.5 279.5 694.0 285.0C696.5 290.5 704.3 295.3 706.0 300.0C707.7 304.7 705.3 308.3 704.0 313.0C702.7 317.7 698.7 322.3 698.0 328.0C697.3 333.7 701.0 342.2 700.0 347.0C699.0 351.8 694.2 353.5 692.0 357.0C689.8 360.5 689.7 363.0 687.0 368.0C684.3 373.0 680.5 382.7 676.0 387.0C671.5 391.3 664.3 390.8 660.0 394.0C655.7 397.2 654.5 403.2 650.0 406.0C645.5 408.8 638.7 409.8 633.0 411.0C627.3 412.2 620.3 410.8 616.0 413.0C611.7 415.2 609.8 420.8 607.0 424.0C604.2 427.2 600.0 428.2 599.0 432.0C598.0 435.8 601.0 442.0 601.0 447.0C601.0 452.0 600.5 457.3 599.0 462.0C597.5 466.7 594.8 471.0 592.0 475.0C589.2 479.0 585.3 483.3 582.0 486.0C578.7 488.7 576.5 493.7 572.0 491.0C567.5 488.3 562.0 478.5 555.0 470.0C548.0 461.5 539.2 451.7 530.0 440.0C520.8 428.3 513.3 408.3 500.0 400.0C486.7 391.7 463.3 390.8 450.0 390.0C436.7 389.2 428.0 390.7 420.0 395.0C412.0 399.3 407.3 413.5 402.0 416.0Z" fill="#553d30"/></g>
<g clip-path="url(#hairclip)">
<ellipse cx="380" cy="325" rx="26" ry="42" fill="#7c543b" filter="url(#b6)" opacity="0.6"/>
<ellipse cx="372" cy="365" rx="16" ry="22" fill="#7e553a" filter="url(#b6)" opacity="0.5"/>
<ellipse cx="445" cy="262" rx="42" ry="16" fill="#70503c" filter="url(#b6)" opacity="0.6"/>
<ellipse cx="425" cy="248" rx="14" ry="10" fill="#85593d" filter="url(#b3)" opacity="0.7"/>
<ellipse cx="640" cy="290" rx="48" ry="34" fill="#75503a" filter="url(#b10)" opacity="0.8"/>
<ellipse cx="672" cy="340" rx="24" ry="38" fill="#80563b" filter="url(#b6)" opacity="0.6"/>
<ellipse cx="650" cy="262" rx="30" ry="12" fill="#7c553b" filter="url(#b6)" opacity="0.55"/>
<ellipse cx="630" cy="385" rx="30" ry="18" fill="#6a4836" filter="url(#b6)" opacity="0.7"/>
<ellipse cx="610" cy="305" rx="14" ry="22" fill="#42302a" filter="url(#b6)" opacity="0.6"/>
<ellipse cx="655" cy="330" rx="12" ry="16" fill="#46332a" filter="url(#b6)" opacity="0.55"/>
<ellipse cx="405" cy="290" rx="14" ry="12" fill="#46332a" filter="url(#b6)" opacity="0.5"/>
<ellipse cx="690" cy="300" rx="8" ry="20" fill="#94643f" filter="url(#b3)" opacity="0.6"/>
<ellipse cx="352" cy="335" rx="7" ry="20" fill="#94643f" filter="url(#b3)" opacity="0.6"/>
<g filter="url(#b07)"><rect x="338" y="228" width="385" height="275" fill="#a07250" filter="url(#curlL)" opacity=".30"/>
<rect x="338" y="228" width="385" height="275" fill="#241a15" filter="url(#curlD)" opacity=".50"/></g>
<path d="M468.7 269.1A7.9 6.6 0 1 1 455.8 260.3" fill="none" stroke="#2c201a" stroke-width="2.1" opacity="0.41" filter="url(#b07)"/>
<path d="M370.8 309.4A5.4 3.5 0 0 1 380.8 308.5" fill="none" stroke="#c09068" stroke-width="1.3" opacity="0.54" filter="url(#b07)"/>
<path d="M692.5 337.1A6.4 4.6 0 0 1 682.7 343.4" fill="none" stroke="#9a6c48" stroke-width="1.2" opacity="0.39" filter="url(#b07)"/>
<path d="M404.6 344.5A7.8 6.5 0 1 1 417.0 335.2" fill="none" stroke="#b08058" stroke-width="1.7" opacity="0.50" filter="url(#b07)"/>
<path d="M476.1 277.2A5.1 4.1 0 0 1 477.9 286.5" fill="none" stroke="#2c201a" stroke-width="2.1" opacity="0.57" filter="url(#b07)"/>
<path d="M392.4 318.1A8.5 8.4 0 1 1 383.9 303.3" fill="none" stroke="#b08058" stroke-width="1.1" opacity="0.52" filter="url(#b07)"/>
<path d="M625.5 384.0A6.0 3.8 0 1 1 633.5 375.0" fill="none" stroke="#382820" stroke-width="1.1" opacity="0.43" filter="url(#b07)"/>
<path d="M592.9 258.9A8.4 6.0 0 1 1 601.7 245.0" fill="none" stroke="#382820" stroke-width="1.5" opacity="0.55" filter="url(#b07)"/>
<path d="M356.8 321.8A5.0 3.3 0 0 1 348.1 318.8" fill="none" stroke="#2c201a" stroke-width="1.3" opacity="0.47" filter="url(#b07)"/>
<path d="M652.3 251.7A6.7 6.3 0 1 1 659.9 260.3" fill="none" stroke="#382820" stroke-width="1.3" opacity="0.47" filter="url(#b07)"/>
<path d="M690.4 270.7A5.1 4.7 0 0 1 687.3 261.3" fill="none" stroke="#382820" stroke-width="1.2" opacity="0.43" filter="url(#b07)"/>
<path d="M394.3 337.8A7.7 7.5 0 0 1 395.8 323.4" fill="none" stroke="#c09068" stroke-width="1.8" opacity="0.57" filter="url(#b07)"/>
<path d="M681.8 360.1A7.4 6.3 0 0 1 693.4 351.1" fill="none" stroke="#382820" stroke-width="1.1" opacity="0.37" filter="url(#b07)"/>
<path d="M425.9 269.5A6.0 4.9 0 0 1 415.2 271.1" fill="none" stroke="#9a6c48" stroke-width="2.1" opacity="0.53" filter="url(#b07)"/>
<path d="M366.1 270.7A6.3 4.7 0 1 1 367.2 280.8" fill="none" stroke="#c09068" stroke-width="1.1" opacity="0.60" filter="url(#b07)"/>
<path d="M708.4 322.8A6.9 6.2 0 0 1 695.7 320.4" fill="none" stroke="#2c201a" stroke-width="1.6" opacity="0.56" filter="url(#b07)"/>
<path d="M524.6 282.3A9.7 8.8 0 1 1 540.3 272.7" fill="none" stroke="#b08058" stroke-width="1.4" opacity="0.54" filter="url(#b07)"/>
<path d="M383.7 379.8A7.1 5.8 0 0 1 372.3 388.3" fill="none" stroke="#9a6c48" stroke-width="1.9" opacity="0.45" filter="url(#b07)"/>
<path d="M431.2 370.0A9.9 8.9 0 1 1 415.4 378.1" fill="none" stroke="#382820" stroke-width="1.3" opacity="0.51" filter="url(#b07)"/>
<path d="M472.2 249.0A4.2 4.1 0 0 1 472.3 240.8" fill="none" stroke="#c09068" stroke-width="1.5" opacity="0.63" filter="url(#b07)"/>
<path d="M478.0 282.5A5.4 5.3 0 0 1 472.4 273.8" fill="none" stroke="#c09068" stroke-width="1.7" opacity="0.35" filter="url(#b07)"/>
<path d="M676.3 291.7A7.9 7.2 0 0 1 673.4 306.3" fill="none" stroke="#382820" stroke-width="1.9" opacity="0.49" filter="url(#b07)"/>
<path d="M411.1 368.5A6.0 4.7 0 1 1 403.3 373.9" fill="none" stroke="#382820" stroke-width="1.9" opacity="0.38" filter="url(#b07)"/>
<path d="M398.7 406.6A4.2 3.5 0 1 1 405.4 411.5" fill="none" stroke="#9a6c48" stroke-width="1.7" opacity="0.49" filter="url(#b07)"/>
<path d="M689.7 267.5A7.3 5.9 0 1 1 678.7 260.3" fill="none" stroke="#b08058" stroke-width="2.1" opacity="0.48" filter="url(#b07)"/>
<path d="M658.8 385.7A5.3 4.8 0 0 1 657.5 375.4" fill="none" stroke="#9a6c48" stroke-width="1.4" opacity="0.51" filter="url(#b07)"/>
<path d="M652.1 245.3A8.4 6.5 0 1 1 636.9 250.9" fill="none" stroke="#c09068" stroke-width="2.1" opacity="0.50" filter="url(#b07)"/>
<path d="M356.8 314.9A5.1 3.3 0 1 1 348.6 310.8" fill="none" stroke="#9a6c48" stroke-width="1.7" opacity="0.39" filter="url(#b07)"/>
<path d="M360.1 356.8A7.2 4.5 0 1 1 372.6 360.8" fill="none" stroke="#c09068" stroke-width="1.2" opacity="0.36" filter="url(#b07)"/>
<path d="M383.5 314.3A4.2 3.5 0 0 1 379.7 321.0" fill="none" stroke="#2c201a" stroke-width="1.6" opacity="0.50" filter="url(#b07)"/>
<path d="M587.3 317.9A7.2 6.8 0 1 1 597.7 323.3" fill="none" stroke="#c09068" stroke-width="2.1" opacity="0.43" filter="url(#b07)"/>
<path d="M643.0 265.0A4.7 3.6 0 0 1 649.4 259.0" fill="none" stroke="#9a6c48" stroke-width="1.3" opacity="0.44" filter="url(#b07)"/>
<path d="M383.1 364.5A9.6 9.2 0 0 1 395.8 379.0" fill="none" stroke="#2c201a" stroke-width="2.2" opacity="0.42" filter="url(#b07)"/>
<path d="M694.8 307.2A6.9 6.1 0 1 1 683.6 302.3" fill="none" stroke="#9a6c48" stroke-width="2.2" opacity="0.47" filter="url(#b07)"/>
<path d="M372.4 303.8A6.0 4.4 0 1 1 383.7 304.6" fill="none" stroke="#382820" stroke-width="1.7" opacity="0.50" filter="url(#b07)"/>
<path d="M376.7 405.9A8.7 6.2 0 0 1 362.6 414.2" fill="none" stroke="#2c201a" stroke-width="2.1" opacity="0.40" filter="url(#b07)"/>
<path d="M613.0 371.2A9.1 6.0 0 1 1 610.8 385.9" fill="none" stroke="#382820" stroke-width="2.1" opacity="0.52" filter="url(#b07)"/>
<path d="M595.5 251.2A4.3 3.1 0 1 1 598.7 259.3" fill="none" stroke="#b08058" stroke-width="1.0" opacity="0.38" filter="url(#b07)"/>
<path d="M429.8 285.3A4.7 4.6 0 1 1 424.3 280.3" fill="none" stroke="#382820" stroke-width="1.3" opacity="0.39" filter="url(#b07)"/>
<path d="M537.2 284.5A4.7 4.5 0 0 1 530.1 279.7" fill="none" stroke="#9a6c48" stroke-width="1.8" opacity="0.51" filter="url(#b07)"/>
<path d="M418.1 323.7A8.0 4.9 0 1 1 426.0 311.7" fill="none" stroke="#2c201a" stroke-width="1.0" opacity="0.50" filter="url(#b07)"/>
<path d="M691.9 329.2A5.5 4.7 0 1 1 702.4 328.7" fill="none" stroke="#382820" stroke-width="1.7" opacity="0.62" filter="url(#b07)"/>
<path d="M695.0 297.6A5.3 4.0 0 0 1 691.3 288.0" fill="none" stroke="#9a6c48" stroke-width="1.4" opacity="0.37" filter="url(#b07)"/>
<path d="M616.0 286.0A5.0 4.3 0 1 1 611.5 278.5" fill="none" stroke="#c09068" stroke-width="1.3" opacity="0.42" filter="url(#b07)"/>
<path d="M407.1 314.4A5.6 4.1 0 1 1 398.9 310.9" fill="none" stroke="#c09068" stroke-width="1.0" opacity="0.61" filter="url(#b07)"/>
<path d="M428.6 274.1A6.0 4.2 0 0 1 417.6 269.8" fill="none" stroke="#9a6c48" stroke-width="1.9" opacity="0.38" filter="url(#b07)"/>
<path d="M633.2 269.1A7.5 4.8 0 0 1 643.7 258.5" fill="none" stroke="#9a6c48" stroke-width="2.1" opacity="0.61" filter="url(#b07)"/>
<path d="M393.7 386.8A8.7 5.7 0 1 1 402.2 400.4" fill="none" stroke="#382820" stroke-width="1.9" opacity="0.54" filter="url(#b07)"/>
<path d="M354.2 375.3A9.4 6.1 0 1 1 361.0 391.3" fill="none" stroke="#c09068" stroke-width="1.6" opacity="0.50" filter="url(#b07)"/>
<path d="M637.8 372.3A9.0 5.7 0 1 1 645.0 385.7" fill="none" stroke="#9a6c48" stroke-width="1.1" opacity="0.54" filter="url(#b07)"/>
<path d="M696.8 306.1A6.7 5.9 0 0 1 684.8 307.7" fill="none" stroke="#c09068" stroke-width="1.6" opacity="0.35" filter="url(#b07)"/>
<path d="M625.3 365.7A7.0 6.3 0 1 1 637.1 372.2" fill="none" stroke="#b08058" stroke-width="1.6" opacity="0.59" filter="url(#b07)"/>
<path d="M650.6 288.4A8.5 6.8 0 1 1 653.2 272.2" fill="none" stroke="#382820" stroke-width="1.5" opacity="0.49" filter="url(#b07)"/>
<path d="M586.3 364.4A7.7 5.6 0 0 1 598.8 371.4" fill="none" stroke="#9a6c48" stroke-width="1.8" opacity="0.56" filter="url(#b07)"/>
<path d="M561.7 263.3A6.9 6.0 0 1 1 571.1 269.1" fill="none" stroke="#b08058" stroke-width="1.8" opacity="0.44" filter="url(#b07)"/>
<path d="M675.8 270.0A9.9 6.2 0 0 1 664.1 283.4" fill="none" stroke="#382820" stroke-width="1.6" opacity="0.65" filter="url(#b07)"/>
<path d="M711.4 301.7A9.5 6.2 0 0 1 699.5 314.6" fill="none" stroke="#b08058" stroke-width="1.6" opacity="0.64" filter="url(#b07)"/>
<path d="M398.1 374.8A7.1 5.6 0 1 1 385.7 379.7" fill="none" stroke="#9a6c48" stroke-width="2.1" opacity="0.47" filter="url(#b07)"/>
<path d="M395.6 406.0A8.1 6.0 0 1 1 410.3 402.6" fill="none" stroke="#382820" stroke-width="1.4" opacity="0.60" filter="url(#b07)"/>
<path d="M352.2 373.8A9.0 8.7 0 1 1 348.9 359.2" fill="none" stroke="#b08058" stroke-width="1.3" opacity="0.46" filter="url(#b07)"/>
<path d="M360.4 266.1A9.0 8.9 0 1 1 371.3 256.1" fill="none" stroke="#9a6c48" stroke-width="1.5" opacity="0.44" filter="url(#b07)"/>
<path d="M629.8 374.7A6.6 6.3 0 1 1 619.8 368.0" fill="none" stroke="#382820" stroke-width="2.1" opacity="0.51" filter="url(#b07)"/>
<path d="M596.1 251.0A8.4 6.7 0 1 1 611.5 252.3" fill="none" stroke="#2c201a" stroke-width="2.1" opacity="0.52" filter="url(#b07)"/>
<path d="M406.3 316.2A5.7 4.3 0 1 1 410.5 306.5" fill="none" stroke="#2c201a" stroke-width="1.3" opacity="0.49" filter="url(#b07)"/>
<path d="M592.8 263.9A7.9 6.4 0 1 1 579.7 255.4" fill="none" stroke="#382820" stroke-width="1.5" opacity="0.45" filter="url(#b07)"/>
<path d="M618.6 319.9A7.3 4.6 0 0 1 614.3 306.6" fill="none" stroke="#c09068" stroke-width="1.3" opacity="0.43" filter="url(#b07)"/>
<path d="M608.5 309.2A6.5 5.8 0 0 1 621.3 310.7" fill="none" stroke="#2c201a" stroke-width="1.6" opacity="0.52" filter="url(#b07)"/>
<path d="M643.5 262.0A9.4 9.2 0 1 1 659.7 254.0" fill="none" stroke="#382820" stroke-width="2.0" opacity="0.61" filter="url(#b07)"/>
<path d="M594.6 388.7A6.8 6.6 0 0 1 606.7 389.6" fill="none" stroke="#382820" stroke-width="2.1" opacity="0.51" filter="url(#b07)"/>
<path d="M631.8 277.2A4.9 3.1 0 0 1 623.8 281.8" fill="none" stroke="#382820" stroke-width="1.9" opacity="0.35" filter="url(#b07)"/>
<path d="M391.9 326.9A9.4 6.9 0 1 1 390.6 344.9" fill="none" stroke="#2e221c" stroke-width="3.6" opacity="0.45" filter="url(#b15)"/>
<path d="M391.8 311.1A19.4 10.7 0 0 1 368.1 283.2" fill="none" stroke="#a87a54" stroke-width="3.8" opacity="0.50" filter="url(#b15)"/>
<path d="M629.6 279.5A14.8 11.8 0 0 1 654.1 273.2" fill="none" stroke="#3a2a22" stroke-width="3.3" opacity="0.30" filter="url(#b15)"/>
<path d="M594.8 395.5A11.5 7.8 0 0 1 572.7 396.6" fill="none" stroke="#3a2a22" stroke-width="3.5" opacity="0.30" filter="url(#b15)"/>
<path d="M374.7 313.2A11.2 7.0 0 0 1 380.8 332.9" fill="none" stroke="#3a2a22" stroke-width="4.4" opacity="0.36" filter="url(#b15)"/>
<path d="M685.0 335.2A11.1 9.8 0 0 1 677.3 314.9" fill="none" stroke="#9a6e4c" stroke-width="2.9" opacity="0.38" filter="url(#b15)"/>
<path d="M434.5 404.2A10.6 7.5 0 0 1 416.5 407.7" fill="none" stroke="#3a2a22" stroke-width="4.3" opacity="0.36" filter="url(#b15)"/>
<path d="M392.0 273.0A16.2 12.7 0 0 1 424.0 273.2" fill="none" stroke="#2e221c" stroke-width="3.4" opacity="0.37" filter="url(#b15)"/>
<path d="M464.4 281.0A9.0 6.7 0 0 1 463.2 263.5" fill="none" stroke="#9a6e4c" stroke-width="4.4" opacity="0.38" filter="url(#b15)"/>
<path d="M634.3 303.7A17.8 12.1 0 1 1 605.2 283.2" fill="none" stroke="#8a6044" stroke-width="4.8" opacity="0.34" filter="url(#b15)"/>
<path d="M362.4 292.9A17.9 12.8 0 0 1 375.3 320.9" fill="none" stroke="#9a6e4c" stroke-width="4.5" opacity="0.31" filter="url(#b15)"/>
<path d="M408.0 266.9A15.7 8.9 0 0 1 420.9 239.6" fill="none" stroke="#a87a54" stroke-width="4.4" opacity="0.44" filter="url(#b15)"/>
<path d="M659.5 283.0A16.9 9.5 0 1 1 683.9 305.9" fill="none" stroke="#9a6e4c" stroke-width="3.1" opacity="0.40" filter="url(#b15)"/>
<path d="M673.5 256.5A17.8 13.6 0 1 1 670.2 291.5" fill="none" stroke="#8a6044" stroke-width="3.3" opacity="0.36" filter="url(#b15)"/>
<path d="M378.0 293.8A17.3 12.4 0 0 1 362.7 267.9" fill="none" stroke="#9a6e4c" stroke-width="3.9" opacity="0.33" filter="url(#b15)"/>
<path d="M365.3 350.3A11.3 6.9 0 1 1 386.4 346.5" fill="none" stroke="#3a2a22" stroke-width="2.8" opacity="0.39" filter="url(#b15)"/>
<path d="M664.1 267.8A14.9 9.7 0 1 1 656.5 296.5" fill="none" stroke="#2e221c" stroke-width="3.9" opacity="0.37" filter="url(#b15)"/>
<path d="M608.7 288.6A11.7 7.2 0 0 1 599.2 269.5" fill="none" stroke="#a87a54" stroke-width="2.7" opacity="0.35" filter="url(#b15)"/>
<path d="M591.1 264.3A14.1 11.9 0 0 1 568.6 272.1" fill="none" stroke="#8a6044" stroke-width="4.8" opacity="0.31" filter="url(#b15)"/>
<path d="M463.7 262.2A11.1 7.5 0 0 1 442.1 267.0" fill="none" stroke="#9a6e4c" stroke-width="4.7" opacity="0.39" filter="url(#b15)"/>
<path d="M669.6 251.3A15.6 10.4 0 0 1 696.6 262.0" fill="none" stroke="#2e221c" stroke-width="2.6" opacity="0.50" filter="url(#b15)"/>
<path d="M370.9 344.6A19.1 15.0 0 1 1 350.6 376.3" fill="none" stroke="#3a2a22" stroke-width="3.0" opacity="0.36" filter="url(#b15)"/>
<path d="M435.1 378.1A15.0 11.8 0 0 1 408.5 380.3" fill="none" stroke="#3a2a22" stroke-width="2.9" opacity="0.41" filter="url(#b15)"/>
<path d="M590.5 307.7A12.0 10.6 0 1 1 566.6 308.8" fill="none" stroke="#3a2a22" stroke-width="3.3" opacity="0.41" filter="url(#b15)"/>
<path d="M482.2 292.8A17.0 11.9 0 0 1 460.5 274.0" fill="none" stroke="#8a6044" stroke-width="4.6" opacity="0.38" filter="url(#b15)"/>
<path d="M669.7 319.7A10.8 6.3 0 0 1 648.2 319.3" fill="none" stroke="#3a2a22" stroke-width="4.1" opacity="0.37" filter="url(#b15)"/>
<path d="M678.8 248.8A14.4 9.4 0 1 1 662.3 270.9" fill="none" stroke="#8a6044" stroke-width="4.6" opacity="0.31" filter="url(#b15)"/>
<path d="M659.2 283.5A15.7 12.4 0 0 1 685.0 293.3" fill="none" stroke="#a87a54" stroke-width="4.7" opacity="0.43" filter="url(#b15)"/>
<path d="M655.1 359.2A15.8 9.9 0 0 1 640.5 331.6" fill="none" stroke="#a87a54" stroke-width="3.5" opacity="0.40" filter="url(#b15)"/>
<path d="M482.4 253.1A11.7 10.1 0 1 1 480.6 275.8" fill="none" stroke="#9a6e4c" stroke-width="4.6" opacity="0.43" filter="url(#b15)"/>
<path d="M571.0 300.5A13.3 10.3 0 1 1 597.0 298.3" fill="none" stroke="#2e221c" stroke-width="3.3" opacity="0.35" filter="url(#b15)"/>
<path d="M535.3 272.8A9.0 7.4 0 0 1 517.9 277.1" fill="none" stroke="#3a2a22" stroke-width="4.4" opacity="0.39" filter="url(#b15)"/>
<path d="M419.9 328.1A10.2 8.5 0 0 1 403.6 316.4" fill="none" stroke="#9a6e4c" stroke-width="3.8" opacity="0.43" filter="url(#b15)"/>
<path d="M356.8 283.5A19.1 10.9 0 1 1 374.3 249.6" fill="none" stroke="#9a6e4c" stroke-width="3.8" opacity="0.38" filter="url(#b15)"/>
<path d="M388.0 350.0C390.7 338.3 393.7 324.3 400.0 315.0C406.3 305.7 415.2 298.8 426.0 294.0C436.8 289.2 452.7 286.8 465.0 286.0C477.3 285.2 491.7 287.0 500.0 289.0C508.3 291.0 508.3 296.0 515.0 298.0C521.7 300.0 530.0 298.0 540.0 301.0C550.0 304.0 564.5 308.7 575.0 316.0C585.5 323.3 597.2 333.5 603.0 345.0C608.8 356.5 610.0 372.5 610.0 385.0C610.0 397.5 604.7 408.3 603.0 420.0C601.3 431.7 602.2 445.0 600.0 455.0C597.8 465.0 594.7 474.2 590.0 480.0C585.3 485.8 577.0 495.0 572.0 490.0C567.0 485.0 564.5 464.2 560.0 450.0C555.5 435.8 550.8 418.3 545.0 405.0C539.2 391.7 532.5 380.0 525.0 370.0C517.5 360.0 510.0 350.8 500.0 345.0C490.0 339.2 476.7 334.2 465.0 335.0C453.3 335.8 438.5 341.7 430.0 350.0C421.5 358.3 419.0 375.8 414.0 385.0C409.0 394.2 405.0 405.0 400.0 405.0C395.0 405.0 386.0 394.2 384.0 385.0C382.0 375.8 385.3 361.7 388.0 350.0Z" fill="#51433b" filter="url(#b6)" opacity=".97"/>
<ellipse cx="588" cy="355" rx="18" ry="40" fill="#31261f" filter="url(#b6)" opacity=".8"/>
<ellipse cx="520" cy="303" rx="20" ry="12" fill="#362a24" filter="url(#b6)" opacity=".7"/>
<ellipse cx="586" cy="455" rx="11" ry="26" fill="#43362e" filter="url(#b3)" opacity=".8"/>
<ellipse cx="402" cy="396" rx="16" ry="13" fill="#3e3029" filter="url(#b6)" opacity=".7"/>
<path d="M393.6 396.9Q390.9 303.3 470.9 286.6" fill="none" stroke="#3a2f29" stroke-width="2.2" opacity="0.45" filter="url(#b1)" stroke-dasharray="49 2"/>
<path d="M397.1 394.4Q397.7 305.0 473.1 288.1" fill="none" stroke="#2f2621" stroke-width="2.1" opacity="0.43" filter="url(#b1)" stroke-dasharray="53 1"/>
<path d="M400.0 392.4Q402.0 300.1 474.9 289.4" fill="none" stroke="#6b5a50" stroke-width="2.4" opacity="0.32" filter="url(#b1)" stroke-dasharray="83 2"/>
<path d="M401.5 391.4Q406.5 302.3 475.7 290.0" fill="none" stroke="#3a2f29" stroke-width="1.4" opacity="0.38" filter="url(#b1)" stroke-dasharray="65 5"/>
<path d="M404.2 389.5Q403.3 300.4 477.4 291.1" fill="none" stroke="#6b5a50" stroke-width="2.1" opacity="0.47" filter="url(#b1)" stroke-dasharray="46 12"/>
<path d="M410.2 385.3Q409.6 304.9 481.0 293.6" fill="none" stroke="#6b5a50" stroke-width="2.5" opacity="0.36" filter="url(#b1)" stroke-dasharray="38 4"/>
<path d="M414.3 382.4Q418.5 304.9 483.5 295.3" fill="none" stroke="#6b5a50" stroke-width="1.4" opacity="0.50" filter="url(#b1)" stroke-dasharray="43 5"/>
<path d="M415.5 381.6Q415.4 303.9 484.2 295.8" fill="none" stroke="#3a2f29" stroke-width="2.2" opacity="0.26" filter="url(#b1)" stroke-dasharray="57 4"/>
<path d="M420.0 378.5Q427.8 307.8 486.9 297.7" fill="none" stroke="#6b5a50" stroke-width="2.2" opacity="0.44" filter="url(#b1)" stroke-dasharray="53 2"/>
<path d="M422.2 376.9Q427.5 307.1 488.3 298.7" fill="none" stroke="#6b5a50" stroke-width="2.4" opacity="0.28" filter="url(#b1)" stroke-dasharray="54 9"/>
<path d="M426.9 373.6Q428.0 305.0 491.1 300.6" fill="none" stroke="#6b5a50" stroke-width="1.5" opacity="0.38" filter="url(#b1)" stroke-dasharray="53 6"/>
<path d="M430.1 371.4Q436.2 307.4 493.1 302.0" fill="none" stroke="#3a2f29" stroke-width="2.3" opacity="0.29" filter="url(#b1)" stroke-dasharray="26 12"/>
<path d="M432.4 369.8Q435.2 307.1 494.4 302.9" fill="none" stroke="#2f2621" stroke-width="2.4" opacity="0.45" filter="url(#b1)" stroke-dasharray="76 12"/>
<path d="M435.9 367.4Q438.1 312.4 496.5 304.4" fill="none" stroke="#3a2f29" stroke-width="2.4" opacity="0.40" filter="url(#b1)" stroke-dasharray="81 9"/>
<path d="M441.7 363.4Q450.5 310.7 500.0 306.8" fill="none" stroke="#8d7b70" stroke-width="1.1" opacity="0.38" filter="url(#b1)" stroke-dasharray="76 2"/>
<path d="M442.7 362.6Q446.2 315.2 500.7 307.2" fill="none" stroke="#8d7b70" stroke-width="2.0" opacity="0.41" filter="url(#b1)" stroke-dasharray="50 2"/>
<path d="M446.7 359.8Q454.5 315.1 503.1 308.9" fill="none" stroke="#7a685d" stroke-width="2.3" opacity="0.29" filter="url(#b1)" stroke-dasharray="64 1"/>
<path d="M449.8 357.7Q454.2 317.9 504.9 310.2" fill="none" stroke="#7a685d" stroke-width="2.1" opacity="0.25" filter="url(#b1)" stroke-dasharray="80 11"/>
<path d="M455.3 353.8Q460.8 317.4 508.3 312.5" fill="none" stroke="#2f2621" stroke-width="1.4" opacity="0.28" filter="url(#b1)" stroke-dasharray="54 10"/>
<path d="M455.8 353.5Q463.4 318.3 508.6 312.7" fill="none" stroke="#6b5a50" stroke-width="2.1" opacity="0.32" filter="url(#b1)" stroke-dasharray="80 10"/>
<path d="M461.8 349.3Q471.7 316.0 512.2 315.2" fill="none" stroke="#2f2621" stroke-width="1.1" opacity="0.38" filter="url(#b1)" stroke-dasharray="46 4"/>
<path d="M465.6 346.6Q478.6 316.5 514.5 316.8" fill="none" stroke="#2f2621" stroke-width="2.2" opacity="0.33" filter="url(#b1)" stroke-dasharray="74 5"/>
<path d="M468.0 345.0Q477.7 322.3 516.0 317.8" fill="none" stroke="#3a2f29" stroke-width="1.8" opacity="0.46" filter="url(#b1)" stroke-dasharray="25 0"/>
<path d="M470.9 343.0Q483.7 320.7 517.7 319.0" fill="none" stroke="#6b5a50" stroke-width="2.3" opacity="0.35" filter="url(#b1)" stroke-dasharray="34 9"/>
<path d="M476.0 339.4Q484.8 317.7 520.8 321.2" fill="none" stroke="#8d7b70" stroke-width="2.0" opacity="0.29" filter="url(#b1)" stroke-dasharray="43 11"/>
<path d="M476.4 339.1Q484.5 323.1 521.0 321.3" fill="none" stroke="#8d7b70" stroke-width="2.1" opacity="0.43" filter="url(#b1)" stroke-dasharray="33 9"/>
<path d="M500.7 346.7Q533.3 309.8 560.5 301.0" fill="none" stroke="#392e28" stroke-width="2.4" opacity="0.27" filter="url(#b1)" stroke-dasharray="74 1"/>
<path d="M502.5 348.4Q535.1 305.6 561.7 303.4" fill="none" stroke="#85736a" stroke-width="2.3" opacity="0.41" filter="url(#b1)" stroke-dasharray="61 7"/>
<path d="M505.2 351.1Q536.9 316.2 563.6 307.3" fill="none" stroke="#2c231e" stroke-width="1.5" opacity="0.33" filter="url(#b1)" stroke-dasharray="58 0"/>
<path d="M509.0 354.8Q547.3 317.1 566.3 312.6" fill="none" stroke="#66564c" stroke-width="2.5" opacity="0.44" filter="url(#b1)" stroke-dasharray="89 7"/>
<path d="M513.5 359.1Q549.2 324.8 569.4 318.8" fill="none" stroke="#75635a" stroke-width="1.0" opacity="0.38" filter="url(#b1)" stroke-dasharray="37 5"/>
<path d="M515.6 361.2Q546.8 332.8 570.9 321.8" fill="none" stroke="#85736a" stroke-width="1.9" opacity="0.32" filter="url(#b1)" stroke-dasharray="80 0"/>
<path d="M518.9 364.3Q551.9 340.0 573.2 326.4" fill="none" stroke="#85736a" stroke-width="1.0" opacity="0.37" filter="url(#b1)" stroke-dasharray="87 11"/>
<path d="M522.8 368.1Q554.9 344.7 575.9 331.8" fill="none" stroke="#66564c" stroke-width="2.5" opacity="0.38" filter="url(#b1)" stroke-dasharray="45 4"/>
<path d="M526.0 371.2Q564.1 348.1 578.1 336.2" fill="none" stroke="#2c231e" stroke-width="1.2" opacity="0.41" filter="url(#b1)" stroke-dasharray="35 7"/>
<path d="M529.0 374.2Q565.2 357.9 580.2 340.5" fill="none" stroke="#66564c" stroke-width="1.6" opacity="0.35" filter="url(#b1)" stroke-dasharray="75 11"/>
<path d="M530.3 375.4Q568.0 354.1 581.1 342.3" fill="none" stroke="#2c231e" stroke-width="1.5" opacity="0.36" filter="url(#b1)" stroke-dasharray="89 2"/>
<path d="M534.3 379.2Q571.8 362.6 583.9 347.7" fill="none" stroke="#75635a" stroke-width="1.2" opacity="0.40" filter="url(#b1)" stroke-dasharray="29 5"/>
<path d="M537.9 382.8Q572.5 374.0 586.4 352.9" fill="none" stroke="#75635a" stroke-width="2.1" opacity="0.44" filter="url(#b1)" stroke-dasharray="46 7"/>
<path d="M540.7 385.5Q577.3 376.5 588.4 356.7" fill="none" stroke="#2c231e" stroke-width="1.5" opacity="0.41" filter="url(#b1)" stroke-dasharray="55 8"/>
<path d="M543.2 387.9Q575.9 381.9 590.1 360.2" fill="none" stroke="#392e28" stroke-width="1.2" opacity="0.29" filter="url(#b1)" stroke-dasharray="56 11"/>
<path d="M546.7 391.3Q581.2 383.6 592.5 365.1" fill="none" stroke="#66564c" stroke-width="2.5" opacity="0.31" filter="url(#b1)" stroke-dasharray="38 2"/>
<path d="M551.5 395.9Q582.5 393.8 595.9 371.8" fill="none" stroke="#2c231e" stroke-width="2.3" opacity="0.43" filter="url(#b1)" stroke-dasharray="80 4"/>
<path d="M552.6 397.0Q587.9 393.6 596.7 373.4" fill="none" stroke="#2c231e" stroke-width="2.4" opacity="0.37" filter="url(#b1)" stroke-dasharray="26 6"/>
<path d="M557.5 401.8Q591.1 403.0 600.1 380.2" fill="none" stroke="#66564c" stroke-width="1.7" opacity="0.29" filter="url(#b1)" stroke-dasharray="76 0"/>
<path d="M560.4 404.5Q597.7 409.6 602.1 384.1" fill="none" stroke="#392e28" stroke-width="1.9" opacity="0.41" filter="url(#b1)" stroke-dasharray="54 10"/>
<path d="M563.4 407.5Q600.5 417.7 604.2 388.4" fill="none" stroke="#392e28" stroke-width="2.4" opacity="0.42" filter="url(#b1)" stroke-dasharray="40 7"/>
<path d="M565.8 409.8Q597.9 421.3 605.9 391.8" fill="none" stroke="#75635a" stroke-width="1.4" opacity="0.35" filter="url(#b1)" stroke-dasharray="45 4"/>
<path d="M392.0 372.0C393.3 365.8 395.3 345.3 400.0 335.0C404.7 324.7 411.3 316.2 420.0 310.0C428.7 303.8 440.3 299.7 452.0 298.0C463.7 296.3 479.5 297.7 490.0 300.0C500.5 302.3 510.8 310.0 515.0 312.0" fill="none" stroke="#8e7d72" stroke-width="9" opacity="0.38" filter="url(#b3)" stroke-linecap="round"/>
<path d="M404.0 392.0C405.3 385.3 407.0 363.0 412.0 352.0C417.0 341.0 424.7 332.3 434.0 326.0C443.3 319.7 456.7 314.7 468.0 314.0C479.3 313.3 496.3 320.7 502.0 322.0" fill="none" stroke="#9a897e" stroke-width="6" opacity="0.34" filter="url(#b2)" stroke-linecap="round"/>
<path d="M520.0 338.0C524.7 340.3 539.7 345.0 548.0 352.0C556.3 359.0 564.3 370.3 570.0 380.0C575.7 389.7 580.0 405.0 582.0 410.0" fill="none" stroke="#85746a" stroke-width="8" opacity="0.36" filter="url(#b3)" stroke-linecap="round"/>
<path d="M535.0 318.0C540.5 319.3 557.8 320.3 568.0 326.0C578.2 331.7 590.0 341.7 596.0 352.0C602.0 362.3 602.7 382.0 604.0 388.0" fill="none" stroke="#7a695f" stroke-width="6" opacity="0.32" filter="url(#b2)" stroke-linecap="round"/>
<path d="M398.0 360.0C399.7 354.3 402.7 335.3 408.0 326.0C413.3 316.7 421.0 309.5 430.0 304.0C439.0 298.5 456.7 294.8 462.0 293.0" fill="none" stroke="#a39488" stroke-width="2.2" opacity="0.45" filter="url(#b1)" stroke-linecap="round"/>
<path d="M408.0 384.0C409.3 378.0 411.0 358.3 416.0 348.0C421.0 337.7 429.0 328.3 438.0 322.0C447.0 315.7 464.7 312.0 470.0 310.0" fill="none" stroke="#ab9c90" stroke-width="2" opacity="0.45" filter="url(#b1)" stroke-linecap="round"/>
<path d="M420.0 372.0C421.7 367.3 424.7 351.7 430.0 344.0C435.3 336.3 443.0 330.0 452.0 326.0C461.0 322.0 475.0 319.7 484.0 320.0C493.0 320.3 502.3 326.7 506.0 328.0" fill="none" stroke="#a09084" stroke-width="2" opacity="0.4" filter="url(#b1)" stroke-linecap="round"/>
<path d="M526.0 346.0C530.0 348.7 543.3 354.7 550.0 362.0C556.7 369.3 562.0 382.3 566.0 390.0C570.0 397.7 572.7 405.0 574.0 408.0" fill="none" stroke="#9c8c80" stroke-width="2" opacity="0.42" filter="url(#b1)" stroke-linecap="round"/>
<path d="M514.0 350.0C518.0 353.3 531.7 362.0 538.0 370.0C544.3 378.0 548.3 391.0 552.0 398.0C555.7 405.0 558.7 409.7 560.0 412.0" fill="none" stroke="#a39488" stroke-width="1.8" opacity="0.4" filter="url(#b1)" stroke-linecap="round"/>
<path d="M545.0 322.0C549.8 324.0 565.5 328.0 574.0 334.0C582.5 340.0 591.3 349.7 596.0 358.0C600.7 366.3 601.0 379.7 602.0 384.0" fill="none" stroke="#8c7c70" stroke-width="2" opacity="0.4" filter="url(#b1)" stroke-linecap="round"/>
<path d="M396.0 350.0C397.3 345.0 399.3 328.7 404.0 320.0C408.7 311.3 415.3 303.3 424.0 298.0C432.7 292.7 444.7 289.3 456.0 288.0C467.3 286.7 486.0 289.7 492.0 290.0" fill="none" stroke="#2a211c" stroke-width="2.4" opacity="0.4" filter="url(#b1)" stroke-linecap="round"/>
<path d="M414.0 388.0C415.3 382.3 417.0 363.7 422.0 354.0C427.0 344.3 435.0 335.8 444.0 330.0C453.0 324.2 470.7 320.8 476.0 319.0" fill="none" stroke="#2a211c" stroke-width="2" opacity="0.38" filter="url(#b1)" stroke-linecap="round"/>
<path d="M530.0 340.0C534.3 342.7 549.0 348.7 556.0 356.0C563.0 363.3 568.0 375.3 572.0 384.0C576.0 392.7 578.7 404.0 580.0 408.0" fill="none" stroke="#261e19" stroke-width="2.2" opacity="0.4" filter="url(#b1)" stroke-linecap="round"/>
<path d="M568.0 458.0Q562.0 475.0 574.0 490.0" fill="none" stroke="#7c6a60" stroke-width="1.300" opacity=".5" filter="url(#b07)"/>
<path d="M572.3 455.4Q568.0 473.6 576.3 488.3" fill="none" stroke="#30261f" stroke-width="1.300" opacity=".5" filter="url(#b07)"/>
<path d="M576.6 452.9Q574.0 472.1 578.6 486.6" fill="none" stroke="#7c6a60" stroke-width="1.300" opacity=".5" filter="url(#b07)"/>
<path d="M580.9 450.3Q580.0 470.7 580.9 484.9" fill="none" stroke="#30261f" stroke-width="1.300" opacity=".5" filter="url(#b07)"/>
<path d="M585.1 447.7Q586.0 469.3 583.1 483.1" fill="none" stroke="#7c6a60" stroke-width="1.300" opacity=".5" filter="url(#b07)"/>
<path d="M589.4 445.1Q592.0 467.9 585.4 481.4" fill="none" stroke="#30261f" stroke-width="1.300" opacity=".5" filter="url(#b07)"/>
<path d="M593.7 442.6Q598.0 466.4 587.7 479.7" fill="none" stroke="#7c6a60" stroke-width="1.300" opacity=".5" filter="url(#b07)"/>
<path d="M598.0 440.0Q604.0 465.0 590.0 478.0" fill="none" stroke="#30261f" stroke-width="1.300" opacity=".5" filter="url(#b07)"/>
<rect x="338" y="228" width="385" height="275" fill="#1e1612" filter="url(#fine)" opacity=".22"/>
</g>
<path d="M406.7 407.1A7.7 7.3 0 1 1 394.5 415.3" fill="none" stroke="#6a4834" stroke-width="1.0" opacity="0.45"/>
<path d="M404.4 421.2A7.6 6.1 0 0 1 403.2 406.2" fill="none" stroke="#6a4834" stroke-width="0.8" opacity="0.65"/>
<path d="M385.5 405.5A6.0 4.4 0 1 1 385.4 414.6" fill="none" stroke="#9a6c48" stroke-width="1.3" opacity="0.61"/>
<path d="M393.8 406.6A8.4 6.3 0 1 1 379.8 404.5" fill="none" stroke="#9a6c48" stroke-width="0.7" opacity="0.55"/>
<path d="M372.5 406.0A5.2 4.3 0 1 1 381.4 406.3" fill="none" stroke="#8a6040" stroke-width="0.8" opacity="0.56"/>
<path d="M387.9 406.6A5.2 3.6 0 1 1 383.5 401.7" fill="none" stroke="#5a3e30" stroke-width="0.8" opacity="0.72"/>
<path d="M365.9 395.0A7.5 5.5 0 0 1 380.1 399.5" fill="none" stroke="#6a4834" stroke-width="1.2" opacity="0.74"/>
<path d="M364.7 394.5A7.5 5.6 0 0 1 379.2 395.9" fill="none" stroke="#5a3e30" stroke-width="1.4" opacity="0.54"/>
<path d="M366.5 395.2A5.1 3.8 0 0 1 359.9 388.4" fill="none" stroke="#8a6040" stroke-width="1.2" opacity="0.56"/>
<path d="M371.3 385.1A5.7 5.3 0 0 1 363.7 393.3" fill="none" stroke="#8a6040" stroke-width="0.7" opacity="0.74"/>
<path d="M365.6 374.9A8.0 6.9 0 1 1 353.8 383.1" fill="none" stroke="#7a543a" stroke-width="0.9" opacity="0.48"/>
<path d="M363.4 380.8A4.6 3.4 0 0 1 358.9 388.7" fill="none" stroke="#5a3e30" stroke-width="0.8" opacity="0.77"/>
<path d="M344.3 365.7A7.4 6.7 0 1 1 347.2 377.1" fill="none" stroke="#9a6c48" stroke-width="1.4" opacity="0.52"/>
<path d="M345.9 372.0A6.8 4.4 0 1 1 354.9 375.7" fill="none" stroke="#9a6c48" stroke-width="1.0" opacity="0.74"/>
<path d="M354.0 348.8A5.6 4.5 0 1 1 344.4 349.3" fill="none" stroke="#6a4834" stroke-width="1.1" opacity="0.75"/>
<path d="M348.2 350.6A3.0 2.3 0 1 1 351.6 354.8" fill="none" stroke="#5a3e30" stroke-width="1.0" opacity="0.79"/>
<path d="M348.2 338.4A3.4 3.2 0 1 1 343.0 334.9" fill="none" stroke="#8a6040" stroke-width="0.8" opacity="0.62"/>
<path d="M335.7 338.9A7.2 6.8 0 0 1 346.1 329.5" fill="none" stroke="#7a543a" stroke-width="1.0" opacity="0.62"/>
<path d="M346.2 322.6A5.9 3.7 0 1 1 357.5 320.0" fill="none" stroke="#9a6c48" stroke-width="0.9" opacity="0.57"/>
<path d="M353.0 320.8A5.7 4.9 0 1 1 344.4 328.3" fill="none" stroke="#6a4834" stroke-width="1.3" opacity="0.57"/>
<path d="M355.6 306.0A4.7 3.6 0 1 1 356.2 313.5" fill="none" stroke="#7a543a" stroke-width="1.1" opacity="0.59"/>
<path d="M365.3 308.4A6.2 5.2 0 1 1 360.1 300.5" fill="none" stroke="#5a3e30" stroke-width="1.2" opacity="0.73"/>
<path d="M350.1 295.0A8.0 7.6 0 1 1 353.4 308.4" fill="none" stroke="#9a6c48" stroke-width="0.8" opacity="0.46"/>
<path d="M352.4 292.5A6.5 5.9 0 1 1 350.4 301.7" fill="none" stroke="#5a3e30" stroke-width="1.4" opacity="0.68"/>
<path d="M359.3 291.8A5.0 3.4 0 0 1 368.7 295.3" fill="none" stroke="#8a6040" stroke-width="0.7" opacity="0.46"/>
<path d="M356.4 294.6A6.1 5.6 0 1 1 367.5 297.9" fill="none" stroke="#7a543a" stroke-width="1.0" opacity="0.69"/>
<path d="M363.1 285.7A5.2 4.1 0 1 1 363.5 292.0" fill="none" stroke="#6a4834" stroke-width="1.0" opacity="0.49"/>
<path d="M374.8 286.0A6.5 6.5 0 0 1 363.0 289.3" fill="none" stroke="#7a543a" stroke-width="1.4" opacity="0.53"/>
<path d="M374.5 280.1A3.7 3.6 0 1 1 380.2 284.4" fill="none" stroke="#6a4834" stroke-width="1.0" opacity="0.71"/>
<path d="M374.0 291.1A6.8 5.3 0 1 1 381.5 280.7" fill="none" stroke="#5a3e30" stroke-width="1.4" opacity="0.54"/>
<path d="M396.6 275.3A8.3 5.2 0 1 1 384.1 267.4" fill="none" stroke="#9a6c48" stroke-width="0.9" opacity="0.71"/>
<path d="M392.8 278.9A3.9 3.5 0 1 1 385.9 275.2" fill="none" stroke="#9a6c48" stroke-width="1.1" opacity="0.51"/>
<path d="M398.0 281.9A8.3 6.3 0 1 1 399.7 268.9" fill="none" stroke="#5a3e30" stroke-width="1.3" opacity="0.78"/>
<path d="M403.2 273.5A7.3 5.4 0 1 1 400.5 264.7" fill="none" stroke="#9a6c48" stroke-width="1.2" opacity="0.79"/>
<path d="M397.8 269.6A7.6 5.7 0 1 1 407.9 273.2" fill="none" stroke="#5a3e30" stroke-width="1.0" opacity="0.72"/>
<path d="M401.8 272.5A4.3 3.6 0 0 1 405.4 264.7" fill="none" stroke="#6a4834" stroke-width="1.4" opacity="0.76"/>
<path d="M416.2 262.5A3.2 3.2 0 1 1 410.8 265.2" fill="none" stroke="#8a6040" stroke-width="1.3" opacity="0.64"/>
<path d="M405.0 261.4A7.3 4.9 0 1 1 417.2 268.3" fill="none" stroke="#5a3e30" stroke-width="1.3" opacity="0.78"/>
<path d="M413.5 249.0A4.3 3.6 0 0 1 421.5 246.3" fill="none" stroke="#8a6040" stroke-width="0.7" opacity="0.58"/>
<path d="M422.7 248.4A6.0 5.7 0 1 1 412.6 242.3" fill="none" stroke="#9a6c48" stroke-width="1.4" opacity="0.63"/>
<path d="M429.5 240.4A5.6 4.2 0 0 1 424.2 230.6" fill="none" stroke="#8a6040" stroke-width="1.2" opacity="0.59"/>
<path d="M430.7 234.1A5.8 4.4 0 1 1 419.2 233.1" fill="none" stroke="#7a543a" stroke-width="1.1" opacity="0.48"/>
<path d="M436.5 236.7A4.7 4.7 0 0 1 444.8 240.5" fill="none" stroke="#6a4834" stroke-width="1.4" opacity="0.62"/>
<path d="M436.1 245.4A6.1 5.7 0 1 1 443.5 248.5" fill="none" stroke="#9a6c48" stroke-width="1.5" opacity="0.54"/>
<path d="M461.0 242.7A3.2 2.4 0 0 1 455.0 241.4" fill="none" stroke="#9a6c48" stroke-width="1.3" opacity="0.62"/>
<path d="M457.5 239.3A7.7 5.4 0 1 1 456.1 249.6" fill="none" stroke="#7a543a" stroke-width="1.2" opacity="0.67"/>
<path d="M470.2 250.0A8.3 8.2 0 0 1 484.6 242.3" fill="none" stroke="#6a4834" stroke-width="0.9" opacity="0.46"/>
<path d="M479.7 247.9A4.4 3.1 0 1 1 473.1 247.2" fill="none" stroke="#7a543a" stroke-width="1.1" opacity="0.71"/>
<path d="M486.9 262.2A7.2 6.3 0 0 1 487.8 248.7" fill="none" stroke="#6a4834" stroke-width="0.9" opacity="0.66"/>
<path d="M487.3 264.1A7.2 5.4 0 0 1 485.0 250.3" fill="none" stroke="#5a3e30" stroke-width="1.1" opacity="0.73"/>
<path d="M505.7 260.1A8.0 7.8 0 1 1 493.2 258.6" fill="none" stroke="#6a4834" stroke-width="0.9" opacity="0.78"/>
<path d="M491.5 264.9A7.8 7.3 0 0 1 504.1 256.6" fill="none" stroke="#5a3e30" stroke-width="1.2" opacity="0.61"/>
<path d="M501.6 267.4A4.9 4.4 0 0 1 509.4 272.9" fill="none" stroke="#6a4834" stroke-width="0.8" opacity="0.61"/>
<path d="M495.8 272.8A7.9 5.6 0 0 1 509.1 264.3" fill="none" stroke="#7a543a" stroke-width="1.4" opacity="0.57"/>
<path d="M513.2 279.7A3.9 2.4 0 0 1 508.0 285.3" fill="none" stroke="#9a6c48" stroke-width="1.4" opacity="0.68"/>
<path d="M509.7 285.9A4.2 3.2 0 0 1 509.2 277.6" fill="none" stroke="#8a6040" stroke-width="0.9" opacity="0.53"/>
<path d="M523.6 282.2A4.3 2.8 0 1 1 524.6 275.7" fill="none" stroke="#8a6040" stroke-width="1.2" opacity="0.60"/>
<path d="M523.5 273.0A5.8 3.9 0 1 1 516.7 276.5" fill="none" stroke="#8a6040" stroke-width="1.0" opacity="0.77"/>
<path d="M536.2 274.6A4.2 2.9 0 1 1 537.5 268.0" fill="none" stroke="#6a4834" stroke-width="0.8" opacity="0.48"/>
<path d="M535.7 277.7A6.3 5.3 0 1 1 537.4 266.3" fill="none" stroke="#6a4834" stroke-width="0.9" opacity="0.47"/>
<path d="M556.1 273.7A7.0 5.0 0 1 1 550.5 264.4" fill="none" stroke="#8a6040" stroke-width="1.2" opacity="0.78"/>
<path d="M551.8 274.2A3.5 2.4 0 1 1 550.3 268.2" fill="none" stroke="#6a4834" stroke-width="1.4" opacity="0.58"/>
<path d="M568.1 265.7A3.9 3.9 0 1 1 561.1 263.2" fill="none" stroke="#5a3e30" stroke-width="0.8" opacity="0.57"/>
<path d="M567.8 263.2A4.3 3.9 0 1 1 562.7 266.9" fill="none" stroke="#9a6c48" stroke-width="0.7" opacity="0.76"/>
<path d="M567.4 260.0A8.2 5.8 0 1 1 580.9 267.8" fill="none" stroke="#7a543a" stroke-width="0.8" opacity="0.67"/>
<path d="M578.1 260.7A3.9 2.8 0 0 1 572.2 265.1" fill="none" stroke="#6a4834" stroke-width="1.4" opacity="0.67"/>
<path d="M581.2 262.1A5.6 3.4 0 0 1 585.2 252.2" fill="none" stroke="#6a4834" stroke-width="0.8" opacity="0.62"/>
<path d="M579.9 259.0A5.8 4.0 0 0 1 587.9 251.0" fill="none" stroke="#9a6c48" stroke-width="0.9" opacity="0.68"/>
<path d="M599.4 257.8A5.5 4.6 0 1 1 591.0 252.5" fill="none" stroke="#5a3e30" stroke-width="1.2" opacity="0.46"/>
<path d="M585.1 258.6A8.3 7.8 0 1 1 597.5 259.7" fill="none" stroke="#5a3e30" stroke-width="1.2" opacity="0.80"/>
<path d="M600.2 255.6A4.8 3.3 0 0 1 602.9 246.6" fill="none" stroke="#8a6040" stroke-width="1.0" opacity="0.67"/>
<path d="M598.6 250.5A5.0 3.5 0 1 1 608.1 249.2" fill="none" stroke="#7a543a" stroke-width="1.0" opacity="0.59"/>
<path d="M628.1 252.2A8.5 5.2 0 1 1 620.5 244.8" fill="none" stroke="#7a543a" stroke-width="1.2" opacity="0.54"/>
<path d="M624.6 253.2A6.7 4.4 0 1 1 612.4 253.7" fill="none" stroke="#8a6040" stroke-width="0.7" opacity="0.53"/>
<path d="M627.8 254.4A3.2 3.1 0 0 1 623.3 250.1" fill="none" stroke="#9a6c48" stroke-width="0.8" opacity="0.66"/>
<path d="M634.2 247.2A8.1 5.8 0 1 1 623.2 246.1" fill="none" stroke="#9a6c48" stroke-width="0.9" opacity="0.48"/>
<path d="M633.6 247.1A6.0 4.9 0 1 1 640.1 255.6" fill="none" stroke="#6a4834" stroke-width="1.0" opacity="0.76"/>
<path d="M641.4 251.8A4.7 3.8 0 1 1 632.4 249.4" fill="none" stroke="#6a4834" stroke-width="1.0" opacity="0.65"/>
<path d="M647.3 253.2A3.1 2.2 0 1 1 648.9 247.7" fill="none" stroke="#5a3e30" stroke-width="1.4" opacity="0.53"/>
<path d="M642.5 246.3A3.3 2.7 0 1 1 647.4 250.7" fill="none" stroke="#7a543a" stroke-width="1.4" opacity="0.57"/>
<path d="M656.0 243.5A7.2 5.3 0 1 1 652.3 252.3" fill="none" stroke="#5a3e30" stroke-width="1.0" opacity="0.69"/>
<path d="M654.7 248.2A6.4 4.5 0 1 1 662.9 255.1" fill="none" stroke="#5a3e30" stroke-width="1.2" opacity="0.67"/>
<path d="M669.7 253.3A6.9 5.5 0 1 1 682.3 250.5" fill="none" stroke="#7a543a" stroke-width="1.5" opacity="0.65"/>
<path d="M673.6 250.9A5.3 4.6 0 1 1 680.9 258.4" fill="none" stroke="#5a3e30" stroke-width="0.9" opacity="0.57"/>
<path d="M680.7 256.1A4.9 3.7 0 0 1 688.5 261.1" fill="none" stroke="#5a3e30" stroke-width="0.9" opacity="0.64"/>
<path d="M684.0 266.1A7.4 5.4 0 1 1 690.2 256.6" fill="none" stroke="#8a6040" stroke-width="1.4" opacity="0.74"/>
<path d="M696.2 262.1A8.3 5.8 0 0 1 686.8 274.5" fill="none" stroke="#7a543a" stroke-width="1.4" opacity="0.55"/>
<path d="M684.4 270.0A6.0 4.5 0 1 1 693.0 272.8" fill="none" stroke="#5a3e30" stroke-width="1.0" opacity="0.66"/>
<path d="M690.3 276.3A4.9 3.9 0 0 1 699.9 275.5" fill="none" stroke="#8a6040" stroke-width="1.2" opacity="0.77"/>
<path d="M687.5 277.8A3.8 2.8 0 1 1 693.7 277.8" fill="none" stroke="#9a6c48" stroke-width="1.1" opacity="0.74"/>
<path d="M694.7 284.4A3.9 3.4 0 1 1 689.5 289.8" fill="none" stroke="#7a543a" stroke-width="0.9" opacity="0.57"/>
<path d="M688.5 281.9A8.1 5.6 0 1 1 695.1 295.9" fill="none" stroke="#9a6c48" stroke-width="1.4" opacity="0.59"/>
<path d="M697.4 288.7A3.3 2.9 0 1 1 701.2 293.4" fill="none" stroke="#7a543a" stroke-width="0.7" opacity="0.45"/>
<path d="M694.8 299.2A6.9 6.0 0 0 1 703.3 288.8" fill="none" stroke="#7a543a" stroke-width="0.9" opacity="0.62"/>
<path d="M698.7 299.7A6.0 4.1 0 1 1 701.8 306.3" fill="none" stroke="#9a6c48" stroke-width="1.2" opacity="0.50"/>
<path d="M711.3 299.9A5.9 5.4 0 1 1 709.5 292.4" fill="none" stroke="#5a3e30" stroke-width="1.2" opacity="0.73"/>
<path d="M699.6 317.6A3.3 2.4 0 1 1 704.4 314.6" fill="none" stroke="#8a6040" stroke-width="0.7" opacity="0.67"/>
<path d="M709.5 317.6A7.7 4.8 0 1 1 710.5 303.6" fill="none" stroke="#7a543a" stroke-width="1.4" opacity="0.65"/>
<path d="M697.7 337.0A8.3 7.8 0 0 1 692.7 322.0" fill="none" stroke="#9a6c48" stroke-width="1.0" opacity="0.76"/>
<path d="M704.1 326.7A7.5 5.2 0 1 1 689.7 326.5" fill="none" stroke="#7a543a" stroke-width="1.0" opacity="0.70"/>
<path d="M693.7 340.2A4.2 2.7 0 1 1 699.3 343.7" fill="none" stroke="#6a4834" stroke-width="0.8" opacity="0.58"/>
<path d="M699.3 339.2A3.0 2.2 0 1 1 703.6 334.8" fill="none" stroke="#5a3e30" stroke-width="1.2" opacity="0.79"/>
<path d="M698.4 350.8A5.3 3.7 0 1 1 707.7 346.1" fill="none" stroke="#8a6040" stroke-width="0.7" opacity="0.68"/>
<path d="M702.0 350.9A4.9 4.0 0 0 1 693.8 345.7" fill="none" stroke="#6a4834" stroke-width="1.1" opacity="0.73"/>
<path d="M687.6 357.7A4.3 3.0 0 1 1 695.3 356.6" fill="none" stroke="#9a6c48" stroke-width="1.5" opacity="0.63"/>
<path d="M690.6 350.7A4.3 3.5 0 0 1 693.1 358.8" fill="none" stroke="#5a3e30" stroke-width="1.0" opacity="0.54"/>
<path d="M689.8 374.7A6.3 6.0 0 1 1 684.0 364.0" fill="none" stroke="#9a6c48" stroke-width="1.3" opacity="0.72"/>
<path d="M691.5 366.2A3.2 2.9 0 1 1 687.2 362.9" fill="none" stroke="#6a4834" stroke-width="0.9" opacity="0.52"/>
<path d="M681.6 372.5A7.9 4.9 0 1 1 671.0 380.0" fill="none" stroke="#6a4834" stroke-width="0.9" opacity="0.53"/>
<path d="M679.8 378.3A3.7 3.6 0 1 1 684.8 379.3" fill="none" stroke="#6a4834" stroke-width="0.8" opacity="0.58"/>
<path d="M684.4 390.6A7.4 5.2 0 1 1 674.8 382.4" fill="none" stroke="#5a3e30" stroke-width="1.4" opacity="0.57"/>
<path d="M679.6 381.3A6.5 4.9 0 1 1 668.8 381.0" fill="none" stroke="#7a543a" stroke-width="1.2" opacity="0.60"/>
<path d="M651.2 393.1A7.2 5.9 0 1 1 660.4 402.2" fill="none" stroke="#6a4834" stroke-width="0.9" opacity="0.62"/>
<path d="M657.3 392.4A5.9 5.5 0 1 1 659.3 399.9" fill="none" stroke="#7a543a" stroke-width="1.3" opacity="0.55"/>
<path d="M655.2 407.6A3.2 2.0 0 0 1 648.9 406.0" fill="none" stroke="#7a543a" stroke-width="1.0" opacity="0.72"/>
<path d="M652.3 400.6A4.9 4.6 0 1 1 647.7 404.3" fill="none" stroke="#9a6c48" stroke-width="0.9" opacity="0.48"/>
<path d="M629.6 405.9A8.2 6.6 0 1 1 626.6 419.2" fill="none" stroke="#5a3e30" stroke-width="1.2" opacity="0.52"/>
<path d="M628.4 413.1A6.7 4.7 0 0 1 641.4 410.6" fill="none" stroke="#9a6c48" stroke-width="1.1" opacity="0.79"/>
<path d="M622.3 413.9A6.5 4.1 0 1 1 610.8 408.0" fill="none" stroke="#5a3e30" stroke-width="1.2" opacity="0.50"/>
<path d="M614.0 406.4A6.8 4.4 0 0 1 621.6 416.5" fill="none" stroke="#5a3e30" stroke-width="1.2" opacity="0.69"/>
<path d="M608.5 428.3A3.7 3.1 0 1 1 611.0 422.0" fill="none" stroke="#7a543a" stroke-width="1.3" opacity="0.51"/>
<path d="M608.3 417.1A6.7 5.8 0 1 1 600.9 424.1" fill="none" stroke="#7a543a" stroke-width="0.7" opacity="0.62"/>
<path d="M603.9 432.9A3.2 2.2 0 1 1 599.0 428.6" fill="none" stroke="#7a543a" stroke-width="1.1" opacity="0.65"/>
<path d="M594.8 430.2A4.6 2.9 0 1 1 599.2 433.9" fill="none" stroke="#5a3e30" stroke-width="1.3" opacity="0.79"/>
<path d="M593.1 449.4A6.1 4.4 0 0 1 603.5 443.2" fill="none" stroke="#9a6c48" stroke-width="1.0" opacity="0.48"/>
<path d="M600.2 444.0A4.6 3.0 0 1 1 599.0 452.1" fill="none" stroke="#7a543a" stroke-width="0.7" opacity="0.72"/>
<path d="M592.8 454.3A7.6 4.9 0 1 1 592.6 465.7" fill="none" stroke="#6a4834" stroke-width="1.3" opacity="0.56"/>
<path d="M594.3 467.9A6.4 5.2 0 0 1 601.5 457.3" fill="none" stroke="#6a4834" stroke-width="1.0" opacity="0.74"/>
<path d="M586.3 472.3A4.3 4.2 0 1 1 586.7 478.9" fill="none" stroke="#5a3e30" stroke-width="1.5" opacity="0.62"/>
<path d="M584.9 471.0A5.7 3.8 0 0 1 595.7 473.7" fill="none" stroke="#6a4834" stroke-width="1.1" opacity="0.79"/>
<path d="M580.5 488.9A3.5 2.1 0 1 1 581.7 483.1" fill="none" stroke="#7a543a" stroke-width="1.2" opacity="0.74"/>
<path d="M585.3 485.4A5.8 3.6 0 1 1 579.2 477.7" fill="none" stroke="#8a6040" stroke-width="0.7" opacity="0.78"/>
<path d="M577.3 490.4A4.0 3.3 0 1 1 572.6 486.4" fill="none" stroke="#8a6040" stroke-width="1.1" opacity="0.64"/>
<path d="M567.4 487.1A5.8 5.8 0 0 1 576.8 493.7" fill="none" stroke="#5a3e30" stroke-width="1.2" opacity="0.73"/>
<path d="M563.6 491.1A3.3 2.6 0 1 1 567.4 486.2" fill="none" stroke="#8a6040" stroke-width="1.2" opacity="0.55"/>
<path d="M567.6 488.9A4.9 4.3 0 1 1 568.7 480.5" fill="none" stroke="#5a3e30" stroke-width="0.8" opacity="0.65"/>
<path d="M558.0 488.7A6.1 3.9 0 1 1 559.7 477.0" fill="none" stroke="#8a6040" stroke-width="0.8" opacity="0.76"/>
<path d="M552.5 491.7A6.0 5.2 0 0 1 549.9 480.3" fill="none" stroke="#9a6c48" stroke-width="1.3" opacity="0.53"/>
<path d="M546.2 475.4A5.5 3.5 0 1 1 541.2 481.2" fill="none" stroke="#9a6c48" stroke-width="1.0" opacity="0.48"/>
<path d="M547.5 474.8A5.4 4.6 0 1 1 544.1 483.0" fill="none" stroke="#7a543a" stroke-width="1.5" opacity="0.63"/>
<path d="M544.5 475.1A5.5 5.0 0 0 1 534.1 478.7" fill="none" stroke="#5a3e30" stroke-width="0.8" opacity="0.72"/>
<path d="M539.7 475.5A3.3 2.6 0 1 1 534.4 472.6" fill="none" stroke="#6a4834" stroke-width="0.8" opacity="0.50"/>
<path d="M529.4 482.8A8.0 5.3 0 0 1 521.6 469.3" fill="none" stroke="#8a6040" stroke-width="1.3" opacity="0.57"/>
<path d="M535.7 479.2A7.2 7.1 0 1 1 526.7 468.1" fill="none" stroke="#9a6c48" stroke-width="1.3" opacity="0.47"/>
<path d="M520.6 462.8A6.3 4.4 0 0 1 519.3 475.1" fill="none" stroke="#6a4834" stroke-width="0.9" opacity="0.61"/>
<path d="M529.0 467.2A7.6 5.1 0 0 1 514.3 468.6" fill="none" stroke="#8a6040" stroke-width="1.1" opacity="0.55"/>
<path d="M516.6 457.8A6.8 6.6 0 1 1 505.1 463.5" fill="none" stroke="#8a6040" stroke-width="0.7" opacity="0.57"/>
<path d="M513.7 463.3A3.8 3.2 0 0 1 513.8 470.6" fill="none" stroke="#6a4834" stroke-width="1.2" opacity="0.66"/>
<path d="M499.6 464.6A7.6 6.2 0 0 1 513.6 458.7" fill="none" stroke="#9a6c48" stroke-width="1.0" opacity="0.63"/>
<path d="M502.9 466.3A4.7 3.5 0 1 1 506.1 459.8" fill="none" stroke="#5a3e30" stroke-width="1.1" opacity="0.78"/>
<path d="M495.2 461.8A4.7 2.9 0 0 1 493.4 452.6" fill="none" stroke="#9a6c48" stroke-width="0.8" opacity="0.68"/>
<path d="M493.8 461.7A4.5 3.8 0 1 1 497.4 454.2" fill="none" stroke="#9a6c48" stroke-width="0.8" opacity="0.69"/>
<path d="M491.9 458.7A8.0 6.9 0 1 1 489.8 443.0" fill="none" stroke="#9a6c48" stroke-width="1.0" opacity="0.55"/>
<path d="M486.1 449.4A7.4 6.6 0 1 1 492.0 463.0" fill="none" stroke="#8a6040" stroke-width="1.1" opacity="0.67"/>
<path d="M483.4 451.0A4.9 4.7 0 1 1 474.5 446.8" fill="none" stroke="#8a6040" stroke-width="1.3" opacity="0.63"/>
<path d="M485.0 459.2A7.9 6.0 0 0 1 474.5 447.4" fill="none" stroke="#5a3e30" stroke-width="1.0" opacity="0.72"/>
<path d="M469.0 435.9A8.1 6.7 0 0 1 472.7 451.7" fill="none" stroke="#9a6c48" stroke-width="1.4" opacity="0.57"/>
<path d="M474.0 450.7A8.1 6.0 0 1 1 473.0 435.8" fill="none" stroke="#5a3e30" stroke-width="1.3" opacity="0.60"/>
<path d="M465.2 437.5A7.8 6.4 0 0 1 452.8 446.9" fill="none" stroke="#8a6040" stroke-width="1.3" opacity="0.67"/>
<path d="M454.5 440.9A4.3 4.1 0 1 1 460.0 443.6" fill="none" stroke="#8a6040" stroke-width="1.2" opacity="0.52"/>
<path d="M462.0 442.5A7.0 5.2 0 1 1 457.8 432.4" fill="none" stroke="#9a6c48" stroke-width="0.8" opacity="0.52"/>
<path d="M460.5 436.6A6.0 5.6 0 0 1 450.6 443.1" fill="none" stroke="#8a6040" stroke-width="0.7" opacity="0.62"/>
<path d="M450.4 428.0A6.4 5.4 0 1 1 440.6 429.9" fill="none" stroke="#7a543a" stroke-width="1.0" opacity="0.62"/>
<path d="M449.3 435.1A6.3 5.4 0 1 1 444.2 428.3" fill="none" stroke="#9a6c48" stroke-width="1.0" opacity="0.60"/>
<path d="M444.9 429.7A6.9 6.3 0 0 1 431.1 429.5" fill="none" stroke="#9a6c48" stroke-width="0.8" opacity="0.73"/>
<path d="M431.2 429.7A5.3 4.4 0 1 1 437.6 436.7" fill="none" stroke="#9a6c48" stroke-width="0.9" opacity="0.67"/>
<path d="M422.9 418.5A7.5 7.4 0 1 1 425.1 431.6" fill="none" stroke="#9a6c48" stroke-width="1.1" opacity="0.55"/>
<path d="M436.0 425.4A5.9 3.9 0 1 1 425.1 422.0" fill="none" stroke="#8a6040" stroke-width="1.2" opacity="0.59"/>
<path d="M427.7 430.1A8.4 6.9 0 1 1 420.5 415.9" fill="none" stroke="#6a4834" stroke-width="0.8" opacity="0.78"/>
<path d="M416.5 416.6A5.0 4.1 0 1 1 411.9 421.5" fill="none" stroke="#6a4834" stroke-width="1.0" opacity="0.70"/>
<path d="M417.3 415.2A5.4 4.3 0 1 1 409.9 413.3" fill="none" stroke="#5a3e30" stroke-width="1.0" opacity="0.77"/>
<path d="M409.7 414.3A3.6 2.2 0 1 1 413.2 420.5" fill="none" stroke="#8a6040" stroke-width="1.2" opacity="0.59"/>
<path d="M415.0 368.0C415.5 362.0 416.7 359.5 418.0 356.0C419.3 352.5 420.8 349.5 423.0 347.0C425.2 344.5 428.2 342.7 431.0 341.0C433.8 339.3 436.5 338.2 440.0 337.0C443.5 335.8 447.8 334.7 452.0 334.0C456.2 333.3 460.7 332.8 465.0 333.0C469.3 333.2 473.8 333.8 478.0 335.0C482.2 336.2 486.2 337.8 490.0 340.0C493.8 342.2 497.7 345.2 501.0 348.0C504.3 350.8 507.0 353.7 510.0 357.0C513.0 360.3 516.2 364.2 519.0 368.0C521.8 371.8 524.5 376.0 527.0 380.0C529.5 384.0 531.8 388.3 534.0 392.0C536.2 395.7 538.2 399.2 540.0 402.0C541.8 404.8 543.0 407.2 545.0 409.0C547.0 410.8 548.7 412.5 552.0 413.0C555.3 413.5 561.5 412.7 565.0 412.0C568.5 411.3 570.3 409.8 573.0 409.0C575.7 408.2 578.5 407.0 581.0 407.0C583.5 407.0 586.3 407.7 588.0 409.0C589.7 410.3 590.7 412.7 591.0 415.0C591.3 417.3 590.7 420.3 590.0 423.0C589.3 425.7 588.3 428.3 587.0 431.0C585.7 433.7 584.0 436.7 582.0 439.0C580.0 441.3 577.2 443.3 575.0 445.0C572.8 446.7 570.5 447.2 569.0 449.0C567.5 450.8 566.5 452.8 566.0 456.0C565.5 459.2 565.7 464.0 566.0 468.0C566.3 472.0 567.0 476.3 568.0 480.0C569.0 483.7 571.0 485.8 572.0 490.0C573.0 494.2 573.3 500.0 574.0 505.0C574.7 510.0 575.0 515.3 576.0 520.0C577.0 524.7 578.3 529.2 580.0 533.0C581.7 536.8 583.3 540.0 586.0 543.0C588.7 546.0 592.7 548.8 596.0 551.0C599.3 553.2 604.3 545.8 606.0 556.0C607.7 566.2 626.7 602.7 606.0 612.0C585.3 621.3 502.5 614.7 482.0 612.0C461.5 609.3 481.8 601.7 483.0 596.0C484.2 590.3 487.8 583.5 489.0 578.0C490.2 572.5 490.5 569.7 490.0 563.0C489.5 556.3 487.3 545.2 486.0 538.0C484.7 530.8 483.5 523.8 482.0 520.0C480.5 516.2 480.3 515.7 477.0 515.0C473.7 514.3 467.0 516.5 462.0 516.0C457.0 515.5 451.2 515.2 447.0 512.0C442.8 508.8 439.8 502.3 437.0 497.0C434.2 491.7 432.5 486.2 430.0 480.0C427.5 473.8 424.2 467.2 422.0 460.0C419.8 452.8 418.0 444.2 417.0 437.0C416.0 429.8 416.3 424.5 416.0 417.0C415.7 409.5 415.2 400.2 415.0 392.0C414.8 383.8 414.5 374.0 415.0 368.0Z" fill="url(#skg)"/>
<g clip-path="url(#skinclip)">
<ellipse cx="462" cy="362" rx="34" ry="22" fill="#f7e0d3" filter="url(#b6)" opacity=".9"/>
<ellipse cx="530" cy="420" rx="14" ry="22" fill="#f2d2c2" filter="url(#b6)" opacity=".7"/>
<path d="M414.0 392.0C414.3 387.7 414.3 373.5 416.0 366.0C417.7 358.5 419.8 351.7 424.0 347.0C428.2 342.3 434.2 340.2 441.0 338.0C447.8 335.8 456.8 333.5 465.0 334.0C473.2 334.5 482.5 337.0 490.0 341.0C497.5 345.0 503.8 351.3 510.0 358.0C516.2 364.7 522.0 373.5 527.0 381.0C532.0 388.5 535.8 397.5 540.0 403.0C544.2 408.5 547.7 412.3 552.0 414.0C556.3 415.7 563.7 413.2 566.0 413.0" fill="none" stroke="#a98672" stroke-width="6" filter="url(#b3)" opacity=".75"/>
<path d="M416.0 420.0C416.3 423.3 416.7 433.0 418.0 440.0C419.3 447.0 421.7 455.0 424.0 462.0C426.3 469.0 429.3 476.0 432.0 482.0C434.7 488.0 437.0 493.2 440.0 498.0C443.0 502.8 448.3 508.8 450.0 511.0" fill="none" stroke="#e0b09c" stroke-width="6" filter="url(#b3)" opacity=".7"/>
<path d="M452.0 519.0C456.3 519.2 469.2 521.0 478.0 520.0C486.8 519.0 496.3 516.3 505.0 513.0C513.7 509.7 522.5 505.2 530.0 500.0C537.5 494.8 544.7 488.3 550.0 482.0C555.3 475.7 560.0 465.3 562.0 462.0" fill="none" stroke="#cf9d86" stroke-width="9" filter="url(#b3)" opacity=".8"/>
<ellipse cx="530" cy="540" rx="38" ry="34" fill="#ebc5b1" filter="url(#b6)" opacity=".9"/>
<path d="M483.0 520.0C483.8 524.2 486.5 536.7 488.0 545.0C489.5 553.3 492.0 561.2 492.0 570.0C492.0 578.8 488.7 593.3 488.0 598.0" fill="none" stroke="#d2a18a" stroke-width="8" filter="url(#b3)" opacity=".75"/>
<path d="M567.0 470.0C567.8 475.0 570.0 490.3 572.0 500.0C574.0 509.7 575.0 519.7 579.0 528.0C583.0 536.3 593.2 546.3 596.0 550.0" fill="none" stroke="#d6a993" stroke-width="7" filter="url(#b3)" opacity=".6"/>
<ellipse cx="502" cy="440" rx="27" ry="16" fill="#ee858c" filter="url(#b6)" opacity=".72" transform="rotate(-14 502 440)"/>
<ellipse cx="424" cy="443" rx="8" ry="16" fill="#ee8c92" filter="url(#b3)" opacity=".6"/>
<path d="M446.0 414.0C445.2 416.0 442.5 422.2 441.0 426.0C439.5 429.8 437.8 434.0 437.0 437.0C436.2 440.0 435.3 442.0 436.0 444.0C436.7 446.0 438.8 448.2 441.0 449.0C443.2 449.8 446.3 449.0 449.0 449.0C451.7 449.0 454.7 449.5 457.0 449.0C459.3 448.5 461.5 447.3 463.0 446.0C464.5 444.7 465.5 441.8 466.0 441.0" fill="none" stroke="#cf9e88" stroke-width="2.6" filter="url(#b1)" opacity=".85"/>
<ellipse cx="447" cy="436" rx="7" ry="10" fill="#f5d8ca" filter="url(#b2)" opacity=".85"/>
<ellipse cx="459.500" cy="448" rx="3.200" ry="1.600" fill="#a06c5c" filter="url(#b1)" opacity=".85"/>
<ellipse cx="441" cy="449.500" rx="2" ry="1.200" fill="#a8786a" filter="url(#b1)" opacity=".7"/>
<path d="M448.0 400.0C447.5 402.0 446.0 408.0 445.0 412.0C444.0 416.0 442.5 422.0 442.0 424.0" fill="none" stroke="#d9ab98" stroke-width="4" filter="url(#b2)" opacity=".7"/>
<ellipse cx="487" cy="402" rx="17" ry="7" fill="#d2a08e" filter="url(#b2)" opacity=".7"/>
<ellipse cx="432" cy="404" rx="12" ry="6" fill="#d2a08e" filter="url(#b2)" opacity=".7"/>
<path d="M470 407c6-8 20-11 33-5" fill="none" stroke="#b98474" stroke-width="4" filter="url(#b15)" opacity=".7"/>
<path d="M417 408c5-6 16-7 26-2" fill="none" stroke="#b98474" stroke-width="3.500" filter="url(#b15)" opacity=".7"/>
<path d="M472 410.500c5-6.500 16-9 29-5-7 5.500-19 8.500-29 5z" fill="#efe6e2"/>
<circle cx="488.800" cy="407.300" r="4.600" fill="#51483f"/><circle cx="488.800" cy="407.300" r="2.300" fill="#14100e"/><circle cx="487.500" cy="406" r=".8" fill="#fff" opacity=".8"/>
<path d="M471 411c5-7.500 17-10 31-6" fill="none" stroke="#2a1e1c" stroke-width="2.600"/>
<path d="M473 411.800c8 3.500 18 2 27-5" fill="none" stroke="#6a4c44" stroke-width="1.100"/>
<path d="M419.500 411.500c4-5.500 14-7 24-1-6 4.500-16 5.500-24 1z" fill="#ece2de"/>
<circle cx="435.500" cy="410" r="4.300" fill="#51483f"/><circle cx="435.500" cy="410" r="2.200" fill="#14100e"/><circle cx="434.300" cy="408.800" r=".8" fill="#fff" opacity=".8"/>
<path d="M417.500 412c5-7 16-8 26.500-1.500" fill="none" stroke="#2a1e1c" stroke-width="2.500"/>
<path d="M420 413c6 3.500 15 3 23-2.500" fill="none" stroke="#6a4c44" stroke-width="1.100"/>
<path d="M458 391.500c7-7 17-12.500 27-12.800 10 .3 20 5.500 28 12.500-8-3.500-18-7.300-28-7.800-9 0-18 3.500-25.500 8.800z" fill="#4e372d" filter="url(#b1)" opacity=".95"/>
<path d="M414.500 389.500c7-2.800 16-2 24 3-8-1.200-16-1.500-23.500 0z" fill="#4e372d" stroke="#4e372d" stroke-width="1.600" filter="url(#b1)" opacity=".9"/>
<path d="M435.500 472c4-3.500 9-6.800 14.500-7.200 2-.1 3.500 1 5 1 2 0 3.500-1 5.500-.7 6 1.500 12 5 17.500 8.400-6 1-12.500 1.500-19 1.200-8-.4-16.500-.7-23.500-2.700z" fill="#c04866"/>
<path d="M436.500 472.700c7 2 15.500 2.600 22.500 2.900 6 .2 12.500-.4 18.500-1.400-4 4.500-10 8.500-18.500 9-9.500 .4-17.500-3.500-22.500-10.500z" fill="#d65c7a"/>
<path d="M439 472.800c9 2.200 22 3.400 36 1.200" fill="none" stroke="#702038" stroke-width="1.400" opacity=".85"/>
<ellipse cx="455" cy="478.500" rx="9" ry="2.200" fill="#ee90a6" filter="url(#b1)" opacity=".75"/>
<ellipse cx="457" cy="490" rx="10" ry="3" fill="#d5a28c" filter="url(#b2)" opacity=".7"/>
<path d="M563.0 420.0C564.7 416.8 567.0 413.2 570.0 411.0C573.0 408.8 577.8 407.2 581.0 407.0C584.2 406.8 587.3 408.3 589.0 410.0C590.7 411.7 591.0 414.3 591.0 417.0C591.0 419.7 590.0 423.0 589.0 426.0C588.0 429.0 586.8 432.2 585.0 435.0C583.2 437.8 580.3 440.8 578.0 443.0C575.7 445.2 573.2 447.0 571.0 448.0C568.8 449.0 566.7 450.3 565.0 449.0C563.3 447.7 561.8 443.2 561.0 440.0C560.2 436.8 559.7 433.3 560.0 430.0C560.3 426.7 561.3 423.2 563.0 420.0Z" fill="#e3b29c"/>
<path d="M568.0 430.0C568.8 428.0 570.7 420.8 573.0 418.0C575.3 415.2 579.7 413.0 582.0 413.0C584.3 413.0 586.5 415.5 587.0 418.0C587.5 420.5 586.3 424.8 585.0 428.0C583.7 431.2 581.0 434.7 579.0 437.0C577.0 439.3 574.0 441.2 573.0 442.0" fill="none" stroke="#bb806a" stroke-width="2.4" filter="url(#b1)"/>
<path d="M561.0 414.0C560.5 416.3 558.0 423.0 558.0 428.0C558.0 433.0 560.5 441.3 561.0 444.0" fill="none" stroke="#b9846f" stroke-width="3" filter="url(#b2)" opacity=".6"/>
</g>
<circle cx="563.800" cy="449.300" r="5" fill="url(#pearl)"/>
<g filter="url(#frizz2)"><path d="M392.0 372.0C394.5 365.0 400.3 359.7 404.0 358.0C407.7 356.3 411.7 357.5 414.0 362.0C416.3 366.5 417.5 378.0 418.0 385.0C418.5 392.0 418.3 399.2 417.0 404.0C415.7 408.8 413.2 412.5 410.0 414.0C406.8 415.5 401.5 415.3 398.0 413.0C394.5 410.7 390.0 406.8 389.0 400.0C388.0 393.2 389.5 379.0 392.0 372.0Z" fill="#4b3a31"/></g>
<path d="M397 380a7 5.6000000000000005 0 1 1 11.200000000000001 3.5" fill="none" stroke="#8a6a58" stroke-width="1.400" opacity=".6" filter="url(#b07)"/>
<path d="M402 398a6 4.800000000000001 0 1 1 9.600000000000001 3.0" fill="none" stroke="#7c5e4e" stroke-width="1.400" opacity=".6" filter="url(#b07)"/>
<path d="M393 392a5 4.0 0 1 1 8.0 2.5" fill="none" stroke="#2a1f1a" stroke-width="1.400" opacity=".6" filter="url(#b07)"/>
<path d="M405 372a5 4.0 0 1 1 8.0 2.5" fill="none" stroke="#2a1f1a" stroke-width="1.400" opacity=".6" filter="url(#b07)"/>
<path d="M398 406a5 4.0 0 1 1 8.0 2.5" fill="none" stroke="#8a6a58" stroke-width="1.400" opacity=".6" filter="url(#b07)"/>
<g clip-path="url(#cvs)">
<path d="M443 648L447 633 455 620 466 604 480 596 500 600 560 600 600 564 614 562 626 570 634 582 640 598 645 620 649 648Z" fill="#1b1f35"/>
<path d="M536.0 648.0C518.3 645.7 538.5 638.2 540.0 634.0C541.5 629.8 543.0 626.5 545.0 623.0C547.0 619.5 549.5 616.0 552.0 613.0C554.5 610.0 557.0 607.5 560.0 605.0C563.0 602.5 566.7 600.0 570.0 598.0C573.3 596.0 576.7 594.5 580.0 593.0C583.3 591.5 586.7 589.8 590.0 589.0C593.3 588.2 596.7 588.0 600.0 588.0C603.3 588.0 606.7 588.2 610.0 589.0C613.3 589.8 617.0 591.3 620.0 593.0C623.0 594.7 625.5 596.5 628.0 599.0C630.5 601.5 633.0 604.8 635.0 608.0C637.0 611.2 638.5 614.7 640.0 618.0C641.5 621.3 643.0 623.0 644.0 628.0C645.0 633.0 664.0 644.7 646.0 648.0C628.0 651.3 553.7 650.3 536.0 648.0Z" fill="#eec6b2"/>
<ellipse cx="598" cy="612" rx="24" ry="15" fill="#f8e0d2" filter="url(#b6)" opacity=".95"/>
<path d="M538.0 645.0C539.2 641.5 541.3 630.5 545.0 624.0C548.7 617.5 554.2 611.0 560.0 606.0C565.8 601.0 576.7 596.0 580.0 594.0" fill="none" stroke="#dcaa94" stroke-width="5" filter="url(#b2)" opacity=".7"/>
<circle cx="603.5" cy="572" r="3.6" fill="#f0dada"/>
<circle cx="601" cy="569" r="2.2" fill="#f6eeee"/>
<circle cx="609.5" cy="582.5" r="3.2" fill="#d83848"/>
<circle cx="615.5" cy="581" r="2.3" fill="#5c9a48"/>
<circle cx="606" cy="577" r="1.8" fill="#f4f0ec"/>
<circle cx="612" cy="586" r="1.8" fill="#c02c3c"/>
<circle cx="553.5" cy="603" r="3" fill="#ecc83c"/>
<circle cx="562.5" cy="595.5" r="3.2" fill="#de3434"/>
<circle cx="570" cy="597" r="2.8" fill="#f4eeea"/>
<circle cx="557.5" cy="598.5" r="2.4" fill="#de3434"/>
<circle cx="547.5" cy="611.5" r="3.4" fill="#de3434"/>
<circle cx="551" cy="606.5" r="2.2" fill="#f4eeea"/>
<circle cx="566" cy="592" r="1.8" fill="#f4eeea"/>
<circle cx="540" cy="620.5" r="3.2" fill="#f4eeea"/>
<circle cx="537.5" cy="628.5" r="2.4" fill="#5c9a48"/>
<circle cx="543.5" cy="616" r="2.2" fill="#de3434"/>
<circle cx="535.5" cy="635" r="2.4" fill="#f4eeea"/>
<circle cx="532" cy="640" r="2" fill="#de3434"/>
<circle cx="636.5" cy="603" r="1.6" fill="#e6e0dc"/>
<circle cx="638" cy="596" r="1.4" fill="#d83848"/>
<path d="M490.0 575.0C489.3 573.2 486.2 578.8 484.0 581.0C481.8 583.2 479.3 585.5 477.0 588.0C474.7 590.5 472.0 593.5 470.0 596.0C468.0 598.5 466.8 600.5 465.0 603.0C463.2 605.5 460.7 608.5 459.0 611.0C457.3 613.5 456.5 615.5 455.0 618.0C453.5 620.5 451.3 623.7 450.0 626.0C448.7 628.3 447.2 630.3 447.0 632.0C446.8 633.7 447.8 635.5 449.0 636.0C450.2 636.5 452.2 636.0 454.0 635.0C455.8 634.0 457.8 632.0 460.0 630.0C462.2 628.0 464.7 625.5 467.0 623.0C469.3 620.5 471.5 618.2 474.0 615.0C476.5 611.8 479.7 607.8 482.0 604.0C484.3 600.2 486.7 596.8 488.0 592.0C489.3 587.2 490.7 576.8 490.0 575.0Z" fill="#d9252f"/>
<path d="M489.0 577.0C487.5 578.7 483.2 583.5 480.0 587.0C476.8 590.5 473.2 594.0 470.0 598.0C466.8 602.0 463.7 607.0 461.0 611.0C458.3 615.0 455.2 620.2 454.0 622.0" fill="none" stroke="#ee4848" stroke-width="3" filter="url(#b2)" opacity=".6"/>
<path d="M590.0 549.0C594.0 548.5 595.5 548.5 598.0 549.0C600.5 549.5 602.5 550.8 605.0 552.0C607.5 553.2 610.5 554.3 613.0 556.0C615.5 557.7 617.7 559.8 620.0 562.0C622.3 564.2 625.0 566.5 627.0 569.0C629.0 571.5 630.5 574.2 632.0 577.0C633.5 579.8 634.7 582.5 636.0 586.0C637.3 589.5 640.3 597.3 640.0 598.0C639.7 598.7 636.2 592.8 634.0 590.0C631.8 587.2 629.5 583.7 627.0 581.0C624.5 578.3 621.8 576.0 619.0 574.0C616.2 572.0 613.2 569.8 610.0 569.0C606.8 568.2 603.2 568.2 600.0 569.0C596.8 569.8 593.8 572.2 591.0 574.0C588.2 575.8 585.8 577.7 583.0 580.0C580.2 582.3 576.8 585.3 574.0 588.0C571.2 590.7 569.5 592.7 566.0 596.0C562.5 599.3 558.0 603.5 553.0 608.0C548.0 612.5 541.7 618.7 536.0 623.0C530.3 627.3 524.5 631.0 519.0 634.0C513.5 637.0 508.0 639.5 503.0 641.0C498.0 642.5 492.7 643.3 489.0 643.0C485.3 642.7 483.0 640.8 481.0 639.0C479.0 637.2 477.8 634.7 477.0 632.0C476.2 629.3 475.8 626.3 476.0 623.0C476.2 619.7 477.0 615.5 478.0 612.0C479.0 608.5 480.2 605.0 482.0 602.0C483.8 599.0 486.2 595.0 489.0 594.0C491.8 593.0 494.8 596.7 499.0 596.0C503.2 595.3 508.2 593.0 514.0 590.0C519.8 587.0 527.3 582.2 534.0 578.0C540.7 573.8 547.3 569.3 554.0 565.0C560.7 560.7 568.0 554.7 574.0 552.0C580.0 549.3 586.0 549.5 590.0 549.0Z" fill="url(#collg)"/>
<path d="M612.0 566.0C613.0 568.0 618.2 569.3 621.0 572.0C623.8 574.7 626.5 578.7 629.0 582.0C631.5 585.3 634.2 589.3 636.0 592.0C637.8 594.7 640.0 598.8 640.0 598.0C640.0 597.2 637.7 590.8 636.0 587.0C634.3 583.2 632.3 578.5 630.0 575.0C627.7 571.5 624.5 568.5 622.0 566.0C619.5 563.5 616.7 560.0 615.0 560.0C613.3 560.0 611.0 564.0 612.0 566.0Z" fill="#b81e2a" opacity=".85"/>
<path d="M500.0 603.0C505.0 601.0 520.0 596.3 530.0 591.0C540.0 585.7 550.0 577.0 560.0 571.0C570.0 565.0 581.7 557.3 590.0 555.0C598.3 552.7 606.7 556.7 610.0 557.0" fill="none" stroke="#f66260" stroke-width="4" filter="url(#b2)" opacity=".7"/>
<path d="M477.0 630.0C477.8 631.7 479.8 637.8 482.0 640.0C484.2 642.2 486.3 642.8 490.0 643.0C493.7 643.2 499.0 642.7 504.0 641.0C509.0 639.3 514.5 636.2 520.0 633.0C525.5 629.8 531.3 626.3 537.0 622.0C542.7 617.7 549.0 611.5 554.0 607.0C559.0 602.5 562.2 599.5 567.0 595.0C571.8 590.5 577.5 584.3 583.0 580.0C588.5 575.7 595.5 570.8 600.0 569.0C604.5 567.2 608.3 569.0 610.0 569.0" fill="none" stroke="#86121c" stroke-width="1.3" opacity=".75"/>
<path d="M489.0 595.0C490.7 595.3 494.7 597.8 499.0 597.0C503.3 596.2 509.0 593.2 515.0 590.0C521.0 586.8 528.3 582.2 535.0 578.0C541.7 573.8 548.3 569.3 555.0 565.0C561.7 560.7 569.2 554.7 575.0 552.0C580.8 549.3 587.5 549.5 590.0 549.0" fill="none" stroke="#a81a24" stroke-width="1.2" opacity=".6"/>
<path d="M483 601l-6 9 3 2 8-8z" fill="#1b1f35"/>
<circle cx="473.700" cy="615" r="6.500" fill="url(#pearl)"/>
</g>
</g>
<defs><g id="sil" fill="#fff"><g filter="url(#frizz)"><path d="M402.0 416.0C396.7 418.5 393.0 413.0 388.0 410.0C383.0 407.0 376.7 402.3 372.0 398.0C367.3 393.7 363.3 389.0 360.0 384.0C356.7 379.0 353.8 373.3 352.0 368.0C350.2 362.7 350.3 357.2 349.0 352.0C347.7 346.8 343.8 342.0 344.0 337.0C344.2 332.0 347.3 326.7 350.0 322.0C352.7 317.3 359.2 312.7 360.0 309.0C360.8 305.3 354.7 302.8 355.0 300.0C355.3 297.2 358.2 294.8 362.0 292.0C365.8 289.2 372.3 286.3 378.0 283.0C383.7 279.7 390.3 275.3 396.0 272.0C401.7 268.7 408.5 267.2 412.0 263.0C415.5 258.8 414.5 251.3 417.0 247.0C419.5 242.7 422.7 238.0 427.0 237.0C431.3 236.0 437.5 240.0 443.0 241.0C448.5 242.0 454.3 241.8 460.0 243.0C465.7 244.2 472.0 245.5 477.0 248.0C482.0 250.5 485.7 254.2 490.0 258.0C494.3 261.8 499.7 266.8 503.0 271.0C506.3 275.2 506.8 281.7 510.0 283.0C513.2 284.3 518.0 280.7 522.0 279.0C526.0 277.3 529.3 274.5 534.0 273.0C538.7 271.5 544.8 271.3 550.0 270.0C555.2 268.7 559.0 267.0 565.0 265.0C571.0 263.0 579.7 260.3 586.0 258.0C592.3 255.7 597.3 251.3 603.0 251.0C608.7 250.7 614.3 256.3 620.0 256.0C625.7 255.7 630.5 250.5 637.0 249.0C643.5 247.5 652.5 246.5 659.0 247.0C665.5 247.5 670.7 248.7 676.0 252.0C681.3 255.3 688.0 261.5 691.0 267.0C694.0 272.5 691.5 279.5 694.0 285.0C696.5 290.5 704.3 295.3 706.0 300.0C707.7 304.7 705.3 308.3 704.0 313.0C702.7 317.7 698.7 322.3 698.0 328.0C697.3 333.7 701.0 342.2 700.0 347.0C699.0 351.8 694.2 353.5 692.0 357.0C689.8 360.5 689.7 363.0 687.0 368.0C684.3 373.0 680.5 382.7 676.0 387.0C671.5 391.3 664.3 390.8 660.0 394.0C655.7 397.2 654.5 403.2 650.0 406.0C645.5 408.8 638.7 409.8 633.0 411.0C627.3 412.2 620.3 410.8 616.0 413.0C611.7 415.2 609.8 420.8 607.0 424.0C604.2 427.2 600.0 428.2 599.0 432.0C598.0 435.8 601.0 442.0 601.0 447.0C601.0 452.0 600.5 457.3 599.0 462.0C597.5 466.7 594.8 471.0 592.0 475.0C589.2 479.0 585.3 483.3 582.0 486.0C578.7 488.7 576.5 493.7 572.0 491.0C567.5 488.3 562.0 478.5 555.0 470.0C548.0 461.5 539.2 451.7 530.0 440.0C520.8 428.3 513.3 408.3 500.0 400.0C486.7 391.7 463.3 390.8 450.0 390.0C436.7 389.2 428.0 390.7 420.0 395.0C412.0 399.3 407.3 413.5 402.0 416.0Z" /></g><path d="M415.0 368.0C415.5 362.0 416.7 359.5 418.0 356.0C419.3 352.5 420.8 349.5 423.0 347.0C425.2 344.5 428.2 342.7 431.0 341.0C433.8 339.3 436.5 338.2 440.0 337.0C443.5 335.8 447.8 334.7 452.0 334.0C456.2 333.3 460.7 332.8 465.0 333.0C469.3 333.2 473.8 333.8 478.0 335.0C482.2 336.2 486.2 337.8 490.0 340.0C493.8 342.2 497.7 345.2 501.0 348.0C504.3 350.8 507.0 353.7 510.0 357.0C513.0 360.3 516.2 364.2 519.0 368.0C521.8 371.8 524.5 376.0 527.0 380.0C529.5 384.0 531.8 388.3 534.0 392.0C536.2 395.7 538.2 399.2 540.0 402.0C541.8 404.8 543.0 407.2 545.0 409.0C547.0 410.8 548.7 412.5 552.0 413.0C555.3 413.5 561.5 412.7 565.0 412.0C568.5 411.3 570.3 409.8 573.0 409.0C575.7 408.2 578.5 407.0 581.0 407.0C583.5 407.0 586.3 407.7 588.0 409.0C589.7 410.3 590.7 412.7 591.0 415.0C591.3 417.3 590.7 420.3 590.0 423.0C589.3 425.7 588.3 428.3 587.0 431.0C585.7 433.7 584.0 436.7 582.0 439.0C580.0 441.3 577.2 443.3 575.0 445.0C572.8 446.7 570.5 447.2 569.0 449.0C567.5 450.8 566.5 452.8 566.0 456.0C565.5 459.2 565.7 464.0 566.0 468.0C566.3 472.0 567.0 476.3 568.0 480.0C569.0 483.7 571.0 485.8 572.0 490.0C573.0 494.2 573.3 500.0 574.0 505.0C574.7 510.0 575.0 515.3 576.0 520.0C577.0 524.7 578.3 529.2 580.0 533.0C581.7 536.8 583.3 540.0 586.0 543.0C588.7 546.0 592.7 548.8 596.0 551.0C599.3 553.2 604.3 545.8 606.0 556.0C607.7 566.2 626.7 602.7 606.0 612.0C585.3 621.3 502.5 614.7 482.0 612.0C461.5 609.3 481.8 601.7 483.0 596.0C484.2 590.3 487.8 583.5 489.0 578.0C490.2 572.5 490.5 569.7 490.0 563.0C489.5 556.3 487.3 545.2 486.0 538.0C484.7 530.8 483.5 523.8 482.0 520.0C480.5 516.2 480.3 515.7 477.0 515.0C473.7 514.3 467.0 516.5 462.0 516.0C457.0 515.5 451.2 515.2 447.0 512.0C442.8 508.8 439.8 502.3 437.0 497.0C434.2 491.7 432.5 486.2 430.0 480.0C427.5 473.8 424.2 467.2 422.0 460.0C419.8 452.8 418.0 444.2 417.0 437.0C416.0 429.8 416.3 424.5 416.0 417.0C415.7 409.5 415.2 400.2 415.0 392.0C414.8 383.8 414.5 374.0 415.0 368.0Z" /><path d="M563.0 420.0C564.7 416.8 567.0 413.2 570.0 411.0C573.0 408.8 577.8 407.2 581.0 407.0C584.2 406.8 587.3 408.3 589.0 410.0C590.7 411.7 591.0 414.3 591.0 417.0C591.0 419.7 590.0 423.0 589.0 426.0C588.0 429.0 586.8 432.2 585.0 435.0C583.2 437.8 580.3 440.8 578.0 443.0C575.7 445.2 573.2 447.0 571.0 448.0C568.8 449.0 566.7 450.3 565.0 449.0C563.3 447.7 561.8 443.2 561.0 440.0C560.2 436.8 559.7 433.3 560.0 430.0C560.3 426.7 561.3 423.2 563.0 420.0Z" /><path d="M443 648L447 633 455 620 466 604 480 596 490 575 500 600 560 580 590 550 605 553 620 563 632 578 640 598 645 620 649 648Z"/></g></defs>
</svg>
<!--PORTRAIT_END-->
</div>
<!--RIGHTDOCK-->
<div class="abs" style="left:946px;top:62px;width:78px;height:706px;background:#2b2b2b"></div>
<div class="abs" style="left:946px;top:62px;width:78px;height:11px;background:#3a3a3a"></div>
<svg class="abs" style="left:972px;top:65px" width="8" height="6" viewBox="0 0 8 6"><path d="M3.500 0v6l-3.500-3zM7.500 0v6l-3.500-3z" fill="#e0e0e0"/></svg>
<svg class="abs" style="left:1012px;top:65px" width="8" height="6" viewBox="0 0 8 6"><path d="M3.500 0v6l-3.500-3zM7.500 0v6l-3.500-3z" fill="#e0e0e0"/></svg>
<div class="dk" style="left:946px;top:74px;width:37px;height:40px"></div>
<div class="dk" style="left:946px;top:115px;width:37px;height:40px"></div>
<div class="dk" style="left:946px;top:156px;width:37px;height:40px"></div>
<div class="dk" style="left:946px;top:197px;width:37px;height:568px"></div>
<div class="dk" style="left:986px;top:74px;width:37px;height:68px"></div>
<div class="dk" style="left:986px;top:143px;width:37px;height:40px"></div>
<div class="dk" style="left:986px;top:184px;width:37px;height:68px"></div>
<div class="dk" style="left:986px;top:253px;width:37px;height:512px"></div>
<div class="grip" style="left:955px;top:78px"></div>
<div class="grip" style="left:955px;top:119px"></div>
<div class="grip" style="left:955px;top:160px"></div>
<div class="grip" style="left:995px;top:78px"></div>
<div class="grip" style="left:995px;top:147px"></div>
<div class="grip" style="left:995px;top:188px"></div>
<svg class="abs" style="left:955px;top:88px" width="21" height="19" viewBox="0 0 21 19"><path d="M1 1c2 1.500 4 1 6 .5 2-.5 3.500 .5 3.500 2.500s-1.500 3-3.500 3c-3 0-5-2.500-6-6z" fill="#c2c2c2"/><rect x="10.500" y="3" width="9.500" height="2.600" fill="#c2c2c2"/><rect x="1" y="11.500" width="11" height="2.600" fill="#c2c2c2"/><path d="M12 12.800l5.500-5.300c2.500 3 2.500 7.500 0 10.500z" fill="#c2c2c2"/></svg>
<svg class="abs" style="left:955px;top:128px" width="21" height="19" viewBox="0 0 21 19"><path d="M0 1h3M0 3.500h3M0 6h3M0 8.500h3M4 1h4M4 3.500h4M4 6h4M4 8.500h4" stroke="#c2c2c2" stroke-width="1.400"/><path d="M9.500 5c0-1.800 .8-3 2-3s2 1.200 2 3c0 1.500-.8 2.200-.8 4h6v6h-14.500v-6h6c0-1.800-.7-2.500-.7-4z" fill="#c2c2c2"/><path d="M5.500 17h12.500" stroke="#c2c2c2" stroke-width="1.200"/></svg>
<svg class="abs" style="left:958px;top:171px" width="14" height="17" viewBox="0 0 14 17"><path d="M6 1h6.500v1.300h-1v14h-1.300v-14h-1.700v14h-1.300v-7c-3.500 0-5.200-1.600-5.200-4s1.700-4.300 5-4.300z" fill="#c2c2c2"/></svg>
<svg class="abs" style="left:996px;top:91px" width="20" height="13" viewBox="0 0 20 13"><path d="M0 13l1-5 1.500 2 1.500-5 1.500 3 2-6 1.500 3 1.500-5 1.500 5 1.500-3 1.500 5 1.500-3 1.500 5 1 4z" fill="#c2c2c2"/></svg>
<svg class="abs" style="left:995px;top:115px" width="21" height="21" viewBox="0 0 21 21"><circle cx="10.500" cy="10.500" r="5.500" fill="none" stroke="#c2c2c2" stroke-width="1.600"/><circle cx="10.500" cy="10.500" r="1.800" fill="#c2c2c2"/><path d="M10.500 .500v20M.500 10.500h20M3.500 3.500l14 14M17.500 3.500l-14 14" stroke="#c2c2c2" stroke-width="1.200"/></svg>
<svg class="abs" style="left:996px;top:157px" width="18" height="18" viewBox="0 0 18 18"><circle cx="9" cy="9" r="7.500" fill="#555" stroke="#c2c2c2" stroke-width="1.500"/><path d="M3.700 14.300a7.500 7.500 0 0 1 10.600-10.600z" fill="#c2c2c2"/></svg>
<svg class="abs" style="left:996px;top:198px" width="19" height="18" viewBox="0 0 19 18"><circle cx="9.500" cy="5.500" r="5" fill="#c4c4c4"/><circle cx="5.500" cy="11.500" r="5" fill="#dcdcdc"/><circle cx="13.500" cy="11.500" r="5" fill="#b0b0b0"/><circle cx="9.500" cy="9.500" r="2.600" fill="#6c6c6c"/></svg>
<svg class="abs" style="left:995px;top:226px" width="21" height="19" viewBox="0 0 21 19"><path d="M2.500 3h16" stroke="#c2c2c2" stroke-width="1.200"/><path d="M3.500 14c0-6 3-10.500 7-10.500s7 4.500 7 10.500" fill="none" stroke="#c2c2c2" stroke-width="1.200"/><rect x="1" y="1" width="4" height="4" fill="#c2c2c2"/><rect x="8.500" y="1.500" width="3.500" height="3.500" fill="#c2c2c2"/><rect x="16" y="1" width="4" height="4" fill="#c2c2c2"/><rect x="2" y="13.500" width="3.500" height="3.500" fill="#555" stroke="#c2c2c2" stroke-width="1.100"/><rect x="15.500" y="13.500" width="3.500" height="3.500" fill="#555" stroke="#c2c2c2" stroke-width="1.100"/></svg>
<!--LAYERS-->
<div id="layers" class="abs">
<div class="abs" style="left:0;top:0;width:242px;height:13px;background:#3a3a3a"></div>
<svg class="abs" style="left:213px;top:3px" width="8" height="6" viewBox="0 0 8 6"><path d="M3.500 0v6l-3.500-3zM7.500 0v6l-3.500-3z" fill="#e0e0e0"/></svg>
<svg class="abs" style="left:230px;top:3px" width="7" height="7" viewBox="0 0 7 7"><path d="M.8 .8l5.400 5.400M6.200 .8L.8 6.200" stroke="#f0f0f0" stroke-width="1.600"/></svg>
<div class="abs" style="left:0;top:13px;width:242px;height:18px;background:#424242;border-top:1px solid #2e2e2e"></div>
<div class="abs" style="left:0;top:14px;width:50px;height:17px;background:#535353;border-right:1px solid #2e2e2e;font-size:13px;font-weight:bold;color:#ececec;line-height:19px;padding-left:8px"><span class="fx" style="transform:scaleX(0.825)">Layers</span></div>
<svg class="abs" style="left:224px;top:18px" width="15" height="9" viewBox="0 0 15 9"><path d="M0 2.500h5l-2.500 3z" fill="#e0e0e0"/><path d="M6 1h9M6 3.500h9M6 6h9M6 8.500h9" stroke="#e0e0e0" stroke-width="1.200"/></svg>
<div class="dd" style="left:5px;top:35px;width:79px"><svg style="position:absolute;left:6px;top:4px" width="11" height="11" viewBox="0 0 11 11"><circle cx="6.500" cy="4.500" r="3" fill="none" stroke="#d0d0d0" stroke-width="1.400"/><path d="M4.300 6.700L1 10" stroke="#d0d0d0" stroke-width="1.600"/></svg><span style="position:absolute;left:21px;top:0"><span class="fx" style="transform:scaleX(0.876)">Kind</span></span><svg style="position:absolute;left:68px;top:5px" width="6" height="10" viewBox="0 0 6 10"><path d="M0 4l3-4 3 4zM0 6l3 4 3-4z" fill="#e6e6e6"/></svg></div>
<svg class="abs" style="left:101px;top:39px" width="13" height="11" viewBox="0 0 13 11"><rect x=".6" y=".6" width="11.800" height="9.800" fill="none" stroke="#cfcfcf" stroke-width="1.200"/><path d="M2 9l3-4 2 2.500 1.500-1.500 2.500 3z" fill="#cfcfcf"/><circle cx="9.500" cy="3.200" r="1" fill="#cfcfcf"/></svg>
<svg class="abs" style="left:125px;top:38px" width="12" height="12" viewBox="0 0 12 12"><circle cx="6" cy="6" r="5" fill="#9a9a9a" stroke="#cfcfcf" stroke-width="1"/><path d="M2.500 9.500a5 5 0 0 1 7-7z" fill="#cfcfcf"/></svg>
<svg class="abs" style="left:148px;top:38px" width="13" height="12" viewBox="5 5 14 14.500"><path d="M5.200 5h13.600l.4 4.600h-1.200c-.4-2.300-1.200-3.100-2.800-3.100h-1.300v10c0 1.300 .4 1.600 2 1.700v1.100h-7.800v-1.100c1.600-.1 2-.4 2-1.700v-10h-1.300c-1.600 0-2.400 .8-2.800 3.100h-1.200z" fill="#cfcfcf"/></svg>
<svg class="abs" style="left:173px;top:38px" width="13" height="13" viewBox="0 0 13 13"><rect x="2" y="2" width="9" height="9" fill="none" stroke="#cfcfcf" stroke-width="1.200"/><rect x="0" y="0" width="3.500" height="3.500" fill="#cfcfcf"/><rect x="9.500" y="0" width="3.500" height="3.500" fill="#cfcfcf"/><rect x="0" y="9.500" width="3.500" height="3.500" fill="#cfcfcf"/><rect x="9.500" y="9.500" width="3.500" height="3.500" fill="#cfcfcf"/></svg>
<svg class="abs" style="left:197px;top:37px" width="13" height="14" viewBox="0 0 13 14"><path d="M4 .6h5l3 3v8.500h-8z" fill="#535353" stroke="#cfcfcf" stroke-width="1.200"/><path d="M9 .6v3h3" fill="none" stroke="#cfcfcf" stroke-width="1"/><rect x="0" y="7" width="6.500" height="6.500" fill="#cfcfcf"/></svg>
<div class="abs" style="left:229px;top:36px;width:10px;height:17px;border:1px solid #2f2f2f;border-radius:2px;background:linear-gradient(#8c8c8c 0,#707070 48%,#3a3a3a 52%,#3a3a3a 100%)"></div>
<div class="abs" style="left:0;top:59px;width:242px;height:1px;background:#3c3c3c"></div>
<div class="dd" style="left:5px;top:63px;width:112px"><span style="position:absolute;left:7px;top:0"><span class="fx" style="transform:scaleX(0.945)">Normal</span></span><svg style="position:absolute;left:101px;top:5px" width="6" height="10" viewBox="0 0 6 10"><path d="M0 4l3-4 3 4zM0 6l3 4 3-4z" fill="#e6e6e6"/></svg></div>
<div class="lt" style="left:123px;top:65px"><span class="fx" style="transform:scaleX(0.952)">Opacity:</span></div>
<div class="fld" style="left:174px;top:63px;width:43px"><span class="fx" style="transform-origin:50% 50%;transform:scaleX(0.971)">100%</span></div><div class="fldb" style="left:217px;top:63px"><svg style="position:absolute;left:7px;top:8px" width="7" height="4" viewBox="0 0 7 4"><path d="M0 0h7l-3.500 4z" fill="#e8e8e8"/></svg></div>
<div class="abs" style="left:0;top:87px;width:242px;height:1px;background:#3c3c3c"></div>
<div class="lt" style="left:7px;top:92px"><span class="fx" style="transform:scaleX(0.904)">Lock:</span></div>
<svg class="abs" style="left:45px;top:95px" width="11" height="11" viewBox="0 0 11 11"><rect width="11" height="11" fill="#c8c8c8"/><path d="M0 0h3.700v3.700h-3.700zM7.300 0h3.700v3.700h-3.700zM3.700 3.700h3.600v3.600h-3.600zM0 7.300h3.700v3.700h-3.700zM7.300 7.300h3.700v3.700h-3.700z" fill="#777"/></svg>
<svg class="abs" style="left:65px;top:92px" width="17" height="15" viewBox="0 0 17 15"><path d="M15 .5l1.300 1.200-7 8.500-2-1.800z" fill="#cfcfcf"/><path d="M.5 13.500c3-.2 4.500-1.500 6.200-4l2.300 2.100c-.5 2-2.500 2.800-4.500 3-1.700 .1-3-.2-4-1.100z" fill="#cfcfcf"/></svg>
<svg class="abs" style="left:87px;top:93px" width="15" height="15" viewBox="0 0 15 15"><path d="M7.500 2v11M2 7.500h11" stroke="#cfcfcf" stroke-width="1.200"/><path d="M7.500 0l-2.500 3h5zM7.500 15l-2.500-3h5zM0 7.500l3-2.500v5zM15 7.500l-3-2.500v5z" fill="#cfcfcf"/></svg>
<svg class="abs" style="left:111px;top:93px" width="11" height="13" viewBox="0 0 11 13"><path d="M2.500 6v-2.500c0-3.300 6-3.300 6 0v2.500" fill="none" stroke="#cfcfcf" stroke-width="1.500"/><rect x=".5" y="5.500" width="10" height="7" rx="1" fill="#cfcfcf"/><rect x="5" y="7.500" width="1.200" height="3" fill="#555"/></svg>
<div class="lt" style="left:148px;top:92px"><span class="fx" style="transform:scaleX(0.940)">Fill:</span></div>
<div class="fld" style="left:174px;top:91px;width:43px"><span class="fx" style="transform-origin:50% 50%;transform:scaleX(0.971)">100%</span></div><div class="fldb" style="left:217px;top:91px"><svg style="position:absolute;left:7px;top:8px" width="7" height="4" viewBox="0 0 7 4"><path d="M0 0h7l-3.500 4z" fill="#e8e8e8"/></svg></div>
<div class="abs" style="left:0;top:115px;width:242px;height:1px;background:#2e2e2e"></div>
<div class="abs" style="left:30px;top:117px;width:198px;height:60px;background:#5a6a84"></div>
<div class="abs" style="left:30px;top:116px;width:1px;height:109px;background:#424242"></div>
<div class="abs" style="left:0;top:177px;width:228px;height:1px;background:#3e3e3e"></div>
<svg class="abs" style="left:8px;top:142px" width="15" height="10" viewBox="0 0 15 10"><path d="M.5 5c2-3 4.500-4.500 7-4.500s5 1.500 7 4.500c-2 3-4.500 4.500-7 4.500s-5-1.500-7-4.500z" fill="#d4d4d4"/><circle cx="7.500" cy="5" r="2.800" fill="#4a4a4a"/><circle cx="7.500" cy="5" r="1.300" fill="#bdbdbd"/></svg>
<div class="abs" style="left:9px;top:202px;width:12px;height:12px;border:1px solid #777;background:#4f4f4f"></div>
<!--THUMBS-->
<div class="abs" style="left:32px;top:118px;width:84px;height:58px;border:1px solid #fff"></div>
<div class="abs" style="left:57px;top:118px;width:28px;height:1px;background:#5a6a84"></div>
<div class="abs" style="left:57px;top:175px;width:28px;height:1px;background:#5a6a84"></div>
<svg class="abs" style="left:34px;top:120px" width="80" height="54" viewBox="129 169 710 472" preserveAspectRatio="none"><rect x="129" y="169" width="710" height="472" fill="#fbfbfb"/><use href="#pg"/></svg>
<div class="abs" style="left:34px;top:120px;width:80px;height:54px;border:1px solid #2a2a2a"></div>
<svg class="abs" style="left:129px;top:120px" width="81" height="54" viewBox="129 169 710 472" preserveAspectRatio="none"><rect x="129" y="169" width="710" height="472" fill="#000"/><use href="#sil"/></svg>
<svg class="abs" style="left:34px;top:181px" width="80" height="54" viewBox="129 169 710 472" preserveAspectRatio="none"><rect x="129" y="169" width="710" height="472" fill="#fbfbfb"/><use href="#pg"/></svg>
<div class="abs" style="left:34px;top:181px;width:80px;height:54px;border:1px solid #2a2a2a"></div>
<svg class="abs" style="left:119px;top:139px" width="7" height="16" viewBox="0 0 7 16"><rect x="1" y="1" width="5" height="7" rx="2.500" fill="none" stroke="#d8d8d8" stroke-width="1.400"/><rect x="1" y="8" width="5" height="7" rx="2.500" fill="none" stroke="#d8d8d8" stroke-width="1.400"/><path d="M3.500 5v6" stroke="#d8d8d8" stroke-width="1.300"/></svg>
<div class="abs" style="left:221px;top:151px;width:2px;height:2px;background:#e8e8e8"></div><div class="abs" style="left:225px;top:151px;width:2px;height:2px;background:#e8e8e8"></div>
<div class="abs" style="left:125px;top:200px;font-size:13px;font-style:italic;color:#ececec"><span class="fx" style="transform:scaleX(0.904)">Background</span></div>
<svg class="abs" style="left:200px;top:201px" width="11" height="14" viewBox="0 0 11 14"><path d="M2.800 6.500v-2.500c0-3.300 5.400-3.300 5.400 0v2.500" fill="none" stroke="#cfcfcf" stroke-width="1.300"/><rect x=".7" y="6.200" width="9.600" height="7" rx=".8" fill="none" stroke="#cfcfcf" stroke-width="1.300"/><rect x="5" y="8.500" width="1.200" height="2.800" fill="#cfcfcf"/></svg>
<div class="abs" style="left:228px;top:116px;width:14px;height:109px;background:#4a4a4a;border-left:1px solid #3a3a3a"></div>
<svg class="abs" style="left:232px;top:123px" width="7" height="4" viewBox="0 0 7 4"><path d="M0 4h7l-3.500-4z" fill="#f0f0f0"/></svg>
<svg class="abs" style="left:232px;top:216px" width="7" height="4" viewBox="0 0 7 4"><path d="M0 0h7l-3.500 4z" fill="#f0f0f0"/></svg>
<div class="abs" style="left:229px;top:134px;width:12px;height:62px;border-radius:3px;background:linear-gradient(90deg,#8e8e8e,#787878);border:1px solid #6a6a6a"></div>
<div class="abs" style="left:0;top:225px;width:242px;height:20px;background:#535353;border-top:1px solid #2e2e2e"></div>
<svg class="abs" style="left:39px;top:231px" width="15" height="8" viewBox="0 0 15 8"><rect x=".8" y=".8" width="7" height="6.400" rx="3.200" fill="none" stroke="#8e8e8e" stroke-width="1.500"/><rect x="7.200" y=".8" width="7" height="6.400" rx="3.200" fill="none" stroke="#8e8e8e" stroke-width="1.500"/><path d="M5 4h5" stroke="#8e8e8e" stroke-width="1.400"/></svg>
<div class="abs" style="left:68px;top:226px;font-size:14px;font-style:italic;color:#cfcfcf;font-family:'Liberation Serif',serif;letter-spacing:-.5px">fx</div><svg class="abs" style="left:81px;top:240px" width="4" height="3" viewBox="0 0 4 3"><path d="M0 0h4l-2 3z" fill="#cfcfcf"/></svg>
<svg class="abs" style="left:94px;top:230px" width="14" height="10" viewBox="0 0 14 10"><rect width="14" height="10" fill="#cfcfcf"/><circle cx="7" cy="5" r="2.800" fill="#555"/></svg>
<svg class="abs" style="left:121px;top:229px" width="12" height="12" viewBox="0 0 12 12"><circle cx="6" cy="6" r="5" fill="#555" stroke="#cfcfcf" stroke-width="1.300"/><path d="M2.500 9.500a5 5 0 0 1 7-7z" fill="#cfcfcf"/></svg><svg class="abs" style="left:134px;top:240px" width="4" height="3" viewBox="0 0 4 3"><path d="M0 0h4l-2 3z" fill="#cfcfcf"/></svg>
<svg class="abs" style="left:148px;top:229px" width="13" height="11" viewBox="0 0 13 11"><path d="M0 1h5l1.500 2h6.500v8h-13z" fill="#cfcfcf"/></svg>
<svg class="abs" style="left:175px;top:229px" width="12" height="12" viewBox="0 0 12 12"><path d="M1 1h10v10h-5v-5h-5z" fill="#cfcfcf"/><path d="M1 6.500l4.500 4.500h-4.500z" fill="#8a8a8a"/></svg>
<svg class="abs" style="left:202px;top:228px" width="12" height="14" viewBox="0 0 12 14"><path d="M4 1h4v1.500h-4z" fill="#cfcfcf"/><rect x="0" y="2.500" width="12" height="1.800" fill="#cfcfcf"/><path d="M1.500 5h9l-1 8.500h-7z" fill="none" stroke="#cfcfcf" stroke-width="1.200"/><path d="M4.200 6v6.500M6 6v6.500M7.800 6v6.500" stroke="#cfcfcf" stroke-width=".9"/></svg>
<div class="abs" style="left:0;top:245px;width:242px;height:7px;background:#535353;border-top:1px solid #2e2e2e"></div>
<div class="abs" style="left:111px;top:247px;width:20px;height:3px;background:repeating-linear-gradient(90deg,#2e2e2e 0 1px,#535353 1px 2px)"></div>
<svg class="abs" style="left:232px;top:235px" width="9" height="9" viewBox="0 0 9 9"><path d="M8 0v1M6 2v1M8 2v1M4 4v1M6 4v1M8 4v1M2 6v1M4 6v1M6 6v1M8 6v1M0 8v1M2 8v1M4 8v1M6 8v1M8 8v1" stroke="#7a7a7a" stroke-width="1"/></svg>
</div>
<svg class="abs" style="left:796px;top:344px;z-index:30" width="18" height="19" viewBox="0 0 18 19"><path d="M3.500 1.200c1.200-.6 2.300 0 2.900 1.200l2.300 4.800 .9-.4c.9-.4 1.800 0 2.200 .8l.3 .5c.9-.4 1.800 0 2.200 .8l.3 .6c.8-.3 1.600 .1 2 .9l1 3c.5 1.500 0 2.800-1.200 3.400l-4.200 1.900c-1.300 .5-2.500 .2-3.400-.8l-4.500-4.500c-.8-.9 0-2.200 1.200-1.900l1.900 .8-4.600-9.200c-.5-.9-.1-1.500 .7-1.900z" fill="#fff" stroke="#111" stroke-width="1.100" stroke-linejoin="round"/></svg>
<!--BOTTOM-->
<div class="abs" style="left:926px;top:83px;width:17px;height:645px;background:linear-gradient(90deg,#2e2e2e,#484848)"></div>
<div id="status" class="abs"></div>
<div class="abs" style="left:926px;top:728px;width:17px;height:16px;background:#4e4e4e"></div>
<div class="abs" style="left:41px;top:728px;width:48px;height:16px;background:#3a3a3a;color:#f4f4f4;font-size:13px;line-height:16px;padding-left:4px"><span class="fx" style="transform:scaleX(0.957)">16.67%</span></div>
<div class="abs" style="left:89px;top:728px;width:23px;height:16px;background:#535353"></div>
<div class="abs" style="left:94px;top:730px;width:13px;height:13px;border-radius:50%;background:#9a9a9a"></div>
<svg class="abs" style="left:94px;top:730px" width="13" height="13" viewBox="0 0 13 13"><path d="M4.500 4h4v2h1.500v3h-5.500z" fill="#f0f0f0" stroke="#555" stroke-width=".6"/></svg>
<div class="abs" style="left:113px;top:728px;width:170px;height:16px;background:#535353;color:#f0f0f0;font-size:13px;line-height:16px;padding-left:35px"><span class="fx" style="transform:scaleX(0.960)">Doc: 34.5M/34.5M</span></div>
<div class="abs" style="left:283px;top:728px;width:13px;height:16px;background:#4a4a4a"></div>
<svg class="abs" style="left:286px;top:731px" width="7" height="10" viewBox="0 0 7 10"><path d="M0 0L7 5L0 10z" fill="#f0f0f0"/></svg>
<div class="abs" style="left:41px;top:744px;width:905px;height:2px;background:#2b2b2b"></div>
<div id="bottomtabs" class="abs">
<div class="abs" style="left:0;top:1px;width:79px;height:18px;background:#424242;color:#8c8c8c;font-size:13px;font-weight:bold;line-height:18px;padding-left:8px;border-right:1px solid #2e2e2e"><span class="fx" style="transform:scaleX(0.901)">Mini Bridge</span></div>
<div class="abs" style="left:80px;top:0;width:63px;height:19px;background:#535353;color:#ececec;font-size:13px;font-weight:bold;line-height:19px;padding-left:8px;border-right:1px solid #2e2e2e"><span class="fx" style="transform:scaleX(0.901)">Timeline</span></div>
<svg class="abs" style="left:884px;top:6px" width="15" height="9" viewBox="0 0 15 9"><path d="M0 2.500h5l-2.500 3z" fill="#e0e0e0"/><path d="M6 1h9M6 3.500h9M6 6h9M6 8.500h9" stroke="#e0e0e0" stroke-width="1.200"/></svg>
</div>
<div class="abs" style="left:943px;top:62px;width:3px;height:706px;background:#2b2b2b"></div>
<div class="abs" style="left:0;top:765px;width:1024px;height:2px;background:#2a2a2a"></div>
<div class="abs" style="left:0;top:767px;width:1024px;height:1px;background:#3a3a3a"></div><div class="abs" style="left:185px;top:766px;width:55px;height:2px;background:#dcdcdc"></div><div class="abs" style="left:247px;top:766px;width:55px;height:2px;background:#dcdcdc"></div><div class="abs" style="left:1000px;top:767px;width:24px;height:1px;background:#8a8a8a"></div>
</div>
</body>
</html>
